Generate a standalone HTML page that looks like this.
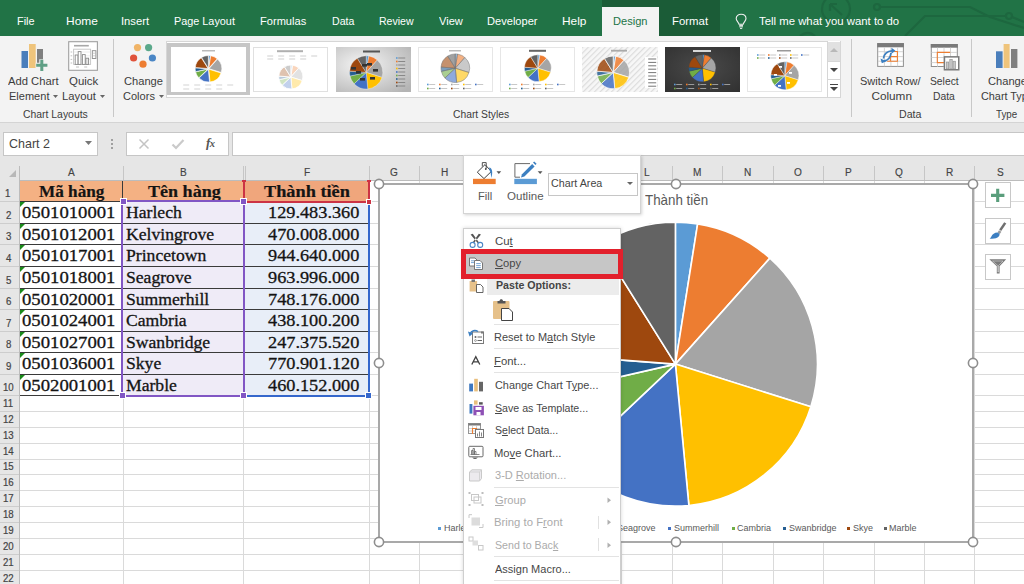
<!DOCTYPE html><html><head><meta charset="utf-8"><style>
*{margin:0;padding:0;box-sizing:border-box}
html,body{width:1024px;height:584px;overflow:hidden;background:#fff;font-family:'Liberation Sans',sans-serif}
.ab{position:absolute}
.t{position:absolute;white-space:nowrap;line-height:1}
u{text-decoration:underline;text-underline-offset:1px}
</style></head><body>
<div class="ab" style="left:0;top:0;width:1024px;height:36px;background:#217346"></div>
<div class="ab" style="left:602px;top:0;width:118px;height:36px;background:#1b5c37"></div>
<svg class="ab" style="left:780px;top:0" width="244" height="36" viewBox="0 0 244 36">
<g fill="none" stroke="#1d673f" stroke-width="2.2">
<circle cx="56" cy="9" r="14"/>
<path d="M62 15 L50 4 M50 4 L50 11 M50 4 L57 4"/>
<circle cx="97" cy="7" r="3"/>
<path d="M100 7 L190 7 L210 17 L244 28"/>
<path d="M125 36 L145 16 L225 16"/>
<circle cx="229" cy="16" r="3"/>
<path d="M232 17 L244 22"/>
<path d="M20 36 Q28 30 35 36"/>
</g></svg>
<div class="t" style="left:16.83px;top:15.03px;font-size:11.77px;font-family:'Liberation Sans',sans-serif;color:#fff;transform:scaleX(0.9266);transform-origin:0 0;">File</div>
<div class="t" style="left:65.64px;top:15.03px;font-size:11.77px;font-family:'Liberation Sans',sans-serif;color:#fff;transform:scaleX(1.0166);transform-origin:0 0;">Home</div>
<div class="t" style="left:120.99px;top:15.03px;font-size:11.77px;font-family:'Liberation Sans',sans-serif;color:#fff;transform:scaleX(0.9536);transform-origin:0 0;">Insert</div>
<div class="t" style="left:174.13px;top:15.03px;font-size:11.77px;font-family:'Liberation Sans',sans-serif;color:#fff;transform:scaleX(0.9216);transform-origin:0 0;">Page Layout</div>
<div class="t" style="left:260.11px;top:15.03px;font-size:11.77px;font-family:'Liberation Sans',sans-serif;color:#fff;transform:scaleX(0.9426);transform-origin:0 0;">Formulas</div>
<div class="t" style="left:331.65px;top:15.03px;font-size:11.77px;font-family:'Liberation Sans',sans-serif;color:#fff;transform:scaleX(0.8996);transform-origin:0 0;">Data</div>
<div class="t" style="left:379.16px;top:15.03px;font-size:11.77px;font-family:'Liberation Sans',sans-serif;color:#fff;transform:scaleX(0.8958);transform-origin:0 0;">Review</div>
<div class="t" style="left:438.94px;top:15.03px;font-size:11.77px;font-family:'Liberation Sans',sans-serif;color:#fff;transform:scaleX(0.9424);transform-origin:0 0;">View</div>
<div class="t" style="left:487.11px;top:15.03px;font-size:11.77px;font-family:'Liberation Sans',sans-serif;color:#fff;transform:scaleX(0.9427);transform-origin:0 0;">Developer</div>
<div class="t" style="left:562.05px;top:15.03px;font-size:11.77px;font-family:'Liberation Sans',sans-serif;color:#fff;transform:scaleX(1.0096);transform-origin:0 0;">Help</div>
<div class="t" style="left:671.79px;top:15.03px;font-size:11.77px;font-family:'Liberation Sans',sans-serif;color:#fff;transform:scaleX(0.9680);transform-origin:0 0;">Format</div>
<div class="t" style="left:759.17px;top:15.03px;font-size:11.77px;font-family:'Liberation Sans',sans-serif;color:#fff;transform:scaleX(0.9656);transform-origin:0 0;">Tell me what you want to do</div>
<div class="ab" style="left:602px;top:7px;width:57px;height:29px;background:#f3f3f3"></div>
<div class="t" style="left:612.86px;top:15.03px;font-size:11.77px;font-family:'Liberation Sans',sans-serif;color:#217346;transform:scaleX(0.9411);transform-origin:0 0;">Design</div>
<svg class="ab" style="left:730px;top:10px" width="22" height="22" viewBox="730 10 22 22">
<path d="M739 24.2 C738.8 22.3 736.2 21 736.2 18.6 C736.2 15.9 738.4 14.2 741.1 14.2 C743.8 14.2 746 15.9 746 18.6 C746 21 743.4 22.3 743.2 24.2 Z" fill="none" stroke="#f0f0f0" stroke-width="1.1"/>
<path d="M739.2 25.4 H743 M739.2 26.8 H743" stroke="#f0f0f0" stroke-width="1"/>
<path d="M740 28.4 H742.2" stroke="#f0f0f0" stroke-width="1"/>
</svg>
<div class="ab" style="left:0;top:36px;width:1024px;height:86px;background:#f3f3f3"></div>
<div class="ab" style="left:0;top:122px;width:1024px;height:1px;background:#d4d4d4"></div>
<svg class="ab" style="left:20px;top:42px" width="30" height="30" viewBox="0 0 30 30">
<rect x="1.5" y="9" width="6.5" height="17" fill="#4a7ebb"/>
<rect x="9" y="2" width="6.7" height="24" fill="#efc47b"/>
<rect x="17" y="7" width="6" height="14" fill="#7f7f7f"/>
<path d="M21.8 17.2 V29.4 M15.7 23.3 H27.9" stroke="#f3f3f3" stroke-width="5"/>
<path d="M21.8 17.7 V28.9 M16.2 23.3 H27.4" stroke="#5f9f85" stroke-width="3"/>
</svg>
<div class="t" style="left:7.50px;top:74.93px;font-size:11.77px;font-family:'Liberation Sans',sans-serif;color:#3c3c3c;transform:scaleX(0.9543);transform-origin:0 0;">Add Chart</div>
<div class="t" style="left:8.82px;top:90.13px;font-size:11.77px;font-family:'Liberation Sans',sans-serif;color:#3c3c3c;transform:scaleX(0.9372);transform-origin:0 0;">Element</div>
<svg class="ab" style="left:53px;top:95px" width="6" height="4"><path d="M0 0 L5 0 L2.5 3Z" fill="#666"/></svg>
<svg class="ab" style="left:66px;top:39px" width="34" height="34" viewBox="66 39 34 34">
<rect x="68.7" y="41.7" width="28.7" height="28.6" fill="#fff" stroke="#a0a0a0" stroke-width="1.1"/>
<rect x="74" y="44.9" width="14.8" height="1.6" fill="#a8a8a8"/>
<rect x="73.6" y="49.2" width="17" height="15.2" fill="none" stroke="#c4c4c4" stroke-width="0.9"/>
<path d="M74 52h16.5M74 55.8h16.5M74 59.5h16.5" stroke="#e0e0e0" stroke-width="0.6"/>
<rect x="75.2" y="55" width="2.8" height="9.4" fill="#fff" stroke="#8a8a8a" stroke-width="0.9"/>
<rect x="78.2" y="51.6" width="2.8" height="12.8" fill="#fff" stroke="#8a8a8a" stroke-width="0.9"/>
<rect x="82.4" y="54.6" width="2.8" height="9.8" fill="#fff" stroke="#8a8a8a" stroke-width="0.9"/>
<rect x="85.8" y="58.2" width="2.8" height="6.2" fill="#e8e8e8" stroke="#8a8a8a" stroke-width="0.9"/>
<rect x="92.3" y="50.7" width="3.6" height="7.8" fill="#fff" stroke="#8a8a8a" stroke-width="0.9"/>
<path d="M92.8 53.2h2.8M92.8 55.8h2.8" stroke="#b0b0b0" stroke-width="0.6"/>
<path d="M70.6 52h1.6M70.6 55.8h1.6M70.6 59.4h1.6M70.6 63h1.6" stroke="#b8b8b8" stroke-width="0.9"/>
<path d="M76 67h3M84.2 67h3" stroke="#c0c0c0" stroke-width="1"/>
</svg>
<div class="t" style="left:69.09px;top:74.93px;font-size:11.77px;font-family:'Liberation Sans',sans-serif;color:#3c3c3c;transform:scaleX(0.9712);transform-origin:0 0;">Quick</div>
<div class="t" style="left:62.30px;top:90.13px;font-size:11.77px;font-family:'Liberation Sans',sans-serif;color:#3c3c3c;transform:scaleX(0.9587);transform-origin:0 0;">Layout</div>
<svg class="ab" style="left:100px;top:95px" width="6" height="4"><path d="M0 0 L5 0 L2.5 3Z" fill="#666"/></svg>
<div class="t" style="left:22.58px;top:108.72px;font-size:10.61px;font-family:'Liberation Sans',sans-serif;color:#3c3c3c;transform:scaleX(0.9808);transform-origin:0 0;">Chart Layouts</div>
<div class="ab" style="left:113px;top:39px;width:1px;height:78px;background:#c8c8c8"></div>
<svg class="ab" style="left:128px;top:42px" width="30" height="28">
<circle cx="9.5" cy="5.6" r="3.6" fill="#f0b467"/>
<circle cx="20.6" cy="5.6" r="3.6" fill="#5ba98b"/>
<circle cx="5.6" cy="16" r="3.6" fill="#e0523a"/>
<circle cx="24.4" cy="16" r="3.6" fill="#4a86c5"/>
<circle cx="15" cy="22.2" r="3.6" fill="#ed7d31"/>
</svg>
<div class="t" style="left:124.04px;top:75.03px;font-size:11.77px;font-family:'Liberation Sans',sans-serif;color:#3c3c3c;transform:scaleX(0.9454);transform-origin:0 0;">Change</div>
<div class="t" style="left:123.25px;top:89.83px;font-size:11.77px;font-family:'Liberation Sans',sans-serif;color:#3c3c3c;transform:scaleX(0.9387);transform-origin:0 0;">Colors</div>
<svg class="ab" style="left:158.5px;top:95px" width="6" height="4"><path d="M0 0 L5 0 L2.5 3Z" fill="#666"/></svg>
<div class="ab" style="left:166px;top:41px;width:675px;height:57px;border:1px solid #d6d6d6;background:#fff"></div>
<div class="ab" style="left:167px;top:43px;width:83px;height:52px;background:#c6c6c6"></div>
<svg class="ab" style="left:171px;top:47px" width="75" height="45">
<rect width="75" height="45" fill="#fff"/>
<rect x="31" y="3.2" width="13" height="1.2" fill="#aaa"/>
<path d="M37.54 21.30 L37.54 8.50 A12.8 12.8 0 0 1 39.54 8.66 Z" fill="#5B9BD5" fill-opacity="1.0" stroke="#fff" stroke-width="0.6" stroke-linejoin="round"/><path d="M37.71 21.35 L39.72 8.71 A12.8 12.8 0 0 1 46.23 11.79 Z" fill="#ED7D31" fill-opacity="1.0" stroke="#fff" stroke-width="0.6" stroke-linejoin="round"/><path d="M37.98 21.67 L46.50 12.11 A12.8 12.8 0 0 1 50.19 25.51 Z" fill="#A5A5A5" fill-opacity="1.0" stroke="#fff" stroke-width="0.6" stroke-linejoin="round"/><path d="M37.81 22.19 L50.02 26.03 A12.8 12.8 0 0 1 39.03 34.93 Z" fill="#FFC000" fill-opacity="1.0" stroke="#fff" stroke-width="0.6" stroke-linejoin="round"/><path d="M37.32 22.27 L38.54 35.01 A12.8 12.8 0 0 1 28.02 31.06 Z" fill="#4472C4" fill-opacity="1.0" stroke="#fff" stroke-width="0.6" stroke-linejoin="round"/><path d="M37.06 22.04 L27.76 30.83 A12.8 12.8 0 0 1 24.58 24.89 Z" fill="#70AD47" fill-opacity="1.0" stroke="#fff" stroke-width="0.6" stroke-linejoin="round"/><path d="M37.00 21.84 L24.52 24.69 A12.8 12.8 0 0 1 24.24 20.87 Z" fill="#255E91" fill-opacity="1.0" stroke="#fff" stroke-width="0.6" stroke-linejoin="round"/><path d="M37.07 21.54 L24.31 20.58 A12.8 12.8 0 0 1 30.28 10.69 Z" fill="#9E480E" fill-opacity="1.0" stroke="#fff" stroke-width="0.6" stroke-linejoin="round"/><path d="M37.36 21.32 L30.57 10.47 A12.8 12.8 0 0 1 37.36 8.52 Z" fill="#636363" fill-opacity="1.0" stroke="#fff" stroke-width="0.6" stroke-linejoin="round"/>
<rect x="12.2" y="37.5" width="6" height="1" fill="#d4d4d4"/><rect x="23.2" y="37.5" width="6" height="1" fill="#d4d4d4"/><rect x="34.2" y="37.5" width="6" height="1" fill="#d4d4d4"/><rect x="45.2" y="37.5" width="6" height="1" fill="#d4d4d4"/><rect x="56.2" y="37.5" width="6" height="1" fill="#d4d4d4"/><rect x="12.2" y="41.5" width="6" height="1" fill="#d4d4d4"/><rect x="23.2" y="41.5" width="6" height="1" fill="#d4d4d4"/><rect x="34.2" y="41.5" width="6" height="1" fill="#d4d4d4"/><rect x="45.2" y="41.5" width="6" height="1" fill="#d4d4d4"/>
</svg>
<svg class="ab" style="left:253px;top:47px" width="75" height="45">
<defs><pattern id="hp2" width="2.6" height="2.6" patternUnits="userSpaceOnUse" patternTransform="rotate(45)"><rect width="2.6" height="2.6" fill="#fff"/><rect width="1.1" height="2.6" fill="#fff" fill-opacity="0.9"/></pattern></defs>
<rect x="0.5" y="0.5" width="74" height="44" fill="#fff" stroke="#e0e0e0"/>
<rect x="24" y="3.2" width="26" height="2" fill="#b0b0b0"/>
<rect x="14.2" y="8.5" width="6" height="1" fill="#d0d0d0"/><rect x="25.2" y="8.5" width="6" height="1" fill="#d0d0d0"/><rect x="36.2" y="8.5" width="6" height="1" fill="#d0d0d0"/><rect x="47.2" y="8.5" width="6" height="1" fill="#d0d0d0"/><rect x="58.2" y="8.5" width="6" height="1" fill="#d0d0d0"/><rect x="14.2" y="11.5" width="6" height="1" fill="#d0d0d0"/><rect x="25.2" y="11.5" width="6" height="1" fill="#d0d0d0"/><rect x="36.2" y="11.5" width="6" height="1" fill="#d0d0d0"/><rect x="47.2" y="11.5" width="6" height="1" fill="#d0d0d0"/>
<path d="M37.80 30.00 L37.80 18.00 A12 12 0 0 1 39.68 18.15 Z" fill="#5B9BD5" fill-opacity="0.5" stroke="#fff" stroke-width="0.8" stroke-linejoin="round"/><path d="M37.80 30.00 L39.68 18.15 A12 12 0 0 1 45.79 21.04 Z" fill="#ED7D31" fill-opacity="0.5" stroke="#fff" stroke-width="0.8" stroke-linejoin="round"/><path d="M37.80 30.00 L45.79 21.04 A12 12 0 0 1 49.25 33.60 Z" fill="#A5A5A5" fill-opacity="0.5" stroke="#fff" stroke-width="0.8" stroke-linejoin="round"/><path d="M37.80 30.00 L49.25 33.60 A12 12 0 0 1 38.94 41.95 Z" fill="#FFC000" fill-opacity="0.5" stroke="#fff" stroke-width="0.8" stroke-linejoin="round"/><path d="M37.80 30.00 L38.94 41.95 A12 12 0 0 1 29.08 38.24 Z" fill="#4472C4" fill-opacity="0.5" stroke="#fff" stroke-width="0.8" stroke-linejoin="round"/><path d="M37.80 30.00 L29.08 38.24 A12 12 0 0 1 26.10 32.68 Z" fill="#70AD47" fill-opacity="0.5" stroke="#fff" stroke-width="0.8" stroke-linejoin="round"/><path d="M37.80 30.00 L26.10 32.68 A12 12 0 0 1 25.83 29.09 Z" fill="#255E91" fill-opacity="0.5" stroke="#fff" stroke-width="0.8" stroke-linejoin="round"/><path d="M37.80 30.00 L25.83 29.09 A12 12 0 0 1 31.44 19.83 Z" fill="#9E480E" fill-opacity="0.5" stroke="#fff" stroke-width="0.8" stroke-linejoin="round"/><path d="M37.80 30.00 L31.44 19.83 A12 12 0 0 1 37.80 18.00 Z" fill="#636363" fill-opacity="0.5" stroke="#fff" stroke-width="0.8" stroke-linejoin="round"/>
<rect x="25" y="18" width="26" height="25" fill="url(#hp2)" opacity="0.35"/>
</svg>
<svg class="ab" style="left:336px;top:47px" width="75" height="45">
<defs><radialGradient id="g3" cx="35%" cy="40%" r="80%"><stop offset="0" stop-color="#f6f6f6"/><stop offset="1" stop-color="#b4b4b4"/></radialGradient></defs>
<rect width="75" height="45" fill="url(#g3)"/>
<rect x="27" y="3.5" width="17" height="2" fill="#555"/>
<path d="M30.20 25.40 L30.20 8.80 A16.6 16.6 0 0 1 32.80 9.00 Z" fill="#5B9BD5" fill-opacity="1.0" stroke="#fff" stroke-width="0.3" stroke-linejoin="round"/><path d="M30.20 25.40 L32.80 9.00 A16.6 16.6 0 0 1 41.25 13.01 Z" fill="#ED7D31" fill-opacity="1.0" stroke="#fff" stroke-width="0.3" stroke-linejoin="round"/><path d="M30.20 25.40 L41.25 13.01 A16.6 16.6 0 0 1 46.03 30.38 Z" fill="#A5A5A5" fill-opacity="1.0" stroke="#fff" stroke-width="0.3" stroke-linejoin="round"/><path d="M30.20 25.40 L46.03 30.38 A16.6 16.6 0 0 1 31.78 41.93 Z" fill="#FFC000" fill-opacity="1.0" stroke="#fff" stroke-width="0.3" stroke-linejoin="round"/><path d="M30.20 25.40 L31.78 41.93 A16.6 16.6 0 0 1 18.13 36.80 Z" fill="#4472C4" fill-opacity="1.0" stroke="#fff" stroke-width="0.3" stroke-linejoin="round"/><path d="M30.20 25.40 L18.13 36.80 A16.6 16.6 0 0 1 14.02 29.10 Z" fill="#70AD47" fill-opacity="1.0" stroke="#fff" stroke-width="0.3" stroke-linejoin="round"/><path d="M30.20 25.40 L14.02 29.10 A16.6 16.6 0 0 1 13.65 24.15 Z" fill="#255E91" fill-opacity="1.0" stroke="#fff" stroke-width="0.3" stroke-linejoin="round"/><path d="M30.20 25.40 L13.65 24.15 A16.6 16.6 0 0 1 21.40 11.33 Z" fill="#9E480E" fill-opacity="1.0" stroke="#fff" stroke-width="0.3" stroke-linejoin="round"/><path d="M30.20 25.40 L21.40 11.33 A16.6 16.6 0 0 1 30.20 8.80 Z" fill="#636363" fill-opacity="1.0" stroke="#fff" stroke-width="0.3" stroke-linejoin="round"/>
<rect x="26" y="17" width="5" height="2.6" fill="#333"/><rect x="31" y="16" width="5" height="2.6" fill="#333"/><rect x="37" y="22" width="5" height="2.6" fill="#333"/><rect x="34" y="30" width="5" height="2.6" fill="#333"/><rect x="24" y="31" width="5" height="2.6" fill="#333"/><rect x="20" y="24" width="5" height="2.6" fill="#333"/><rect x="15" y="20" width="5" height="2.6" fill="#333"/>
<rect x="60" y="10.2" width="1.6" height="1.6" fill="#5B9BD5"/><rect x="62.2" y="10.5" width="7" height="1" fill="#888"/><rect x="60" y="13.7" width="1.6" height="1.6" fill="#ED7D31"/><rect x="62.2" y="14.0" width="7" height="1" fill="#888"/><rect x="60" y="17.2" width="1.6" height="1.6" fill="#A5A5A5"/><rect x="62.2" y="17.5" width="7" height="1" fill="#888"/><rect x="60" y="20.7" width="1.6" height="1.6" fill="#FFC000"/><rect x="62.2" y="21.0" width="7" height="1" fill="#888"/><rect x="60" y="24.2" width="1.6" height="1.6" fill="#4472C4"/><rect x="62.2" y="24.5" width="7" height="1" fill="#888"/><rect x="60" y="27.7" width="1.6" height="1.6" fill="#70AD47"/><rect x="62.2" y="28.0" width="7" height="1" fill="#888"/><rect x="60" y="31.2" width="1.6" height="1.6" fill="#255E91"/><rect x="62.2" y="31.5" width="7" height="1" fill="#888"/><rect x="60" y="34.7" width="1.6" height="1.6" fill="#9E480E"/><rect x="62.2" y="35.0" width="7" height="1" fill="#888"/><rect x="60" y="38.2" width="1.6" height="1.6" fill="#636363"/><rect x="62.2" y="38.5" width="7" height="1" fill="#888"/>
</svg>
<svg class="ab" style="left:418px;top:47px" width="75" height="45">
<rect x="0.5" y="0.5" width="74" height="44" fill="#fff" stroke="#e6e6e6"/>
<rect x="31" y="3.2" width="12" height="1.2" fill="#aaa"/>
<path d="M37.30 21.20 L37.30 6.90 A14.3 14.3 0 0 1 39.54 7.08 Z" fill="#5B9BD5" fill-opacity="0.6" stroke="#777" stroke-width="0.5" stroke-linejoin="round"/><path d="M37.30 21.20 L39.54 7.08 A14.3 14.3 0 0 1 46.82 10.53 Z" fill="#ED7D31" fill-opacity="0.6" stroke="#777" stroke-width="0.5" stroke-linejoin="round"/><path d="M37.30 21.20 L46.82 10.53 A14.3 14.3 0 0 1 50.94 25.49 Z" fill="#A5A5A5" fill-opacity="0.6" stroke="#777" stroke-width="0.5" stroke-linejoin="round"/><path d="M37.30 21.20 L50.94 25.49 A14.3 14.3 0 0 1 38.66 35.44 Z" fill="#FFC000" fill-opacity="0.6" stroke="#777" stroke-width="0.5" stroke-linejoin="round"/><path d="M37.30 21.20 L38.66 35.44 A14.3 14.3 0 0 1 26.91 31.02 Z" fill="#4472C4" fill-opacity="0.6" stroke="#777" stroke-width="0.5" stroke-linejoin="round"/><path d="M37.30 21.20 L26.91 31.02 A14.3 14.3 0 0 1 23.36 24.39 Z" fill="#70AD47" fill-opacity="0.6" stroke="#777" stroke-width="0.5" stroke-linejoin="round"/><path d="M37.30 21.20 L23.36 24.39 A14.3 14.3 0 0 1 23.04 20.12 Z" fill="#255E91" fill-opacity="0.6" stroke="#777" stroke-width="0.5" stroke-linejoin="round"/><path d="M37.30 21.20 L23.04 20.12 A14.3 14.3 0 0 1 29.72 9.08 Z" fill="#9E480E" fill-opacity="0.6" stroke="#777" stroke-width="0.5" stroke-linejoin="round"/><path d="M37.30 21.20 L29.72 9.08 A14.3 14.3 0 0 1 37.30 6.90 Z" fill="#636363" fill-opacity="0.6" stroke="#777" stroke-width="0.5" stroke-linejoin="round"/>
<rect x="9" y="36.7" width="1.6" height="1.6" fill="#5B9BD5"/><rect x="11.2" y="37.0" width="6" height="1" fill="#c8c8c8"/><rect x="21" y="36.7" width="1.6" height="1.6" fill="#ED7D31"/><rect x="23.2" y="37.0" width="6" height="1" fill="#c8c8c8"/><rect x="33" y="36.7" width="1.6" height="1.6" fill="#A5A5A5"/><rect x="35.2" y="37.0" width="6" height="1" fill="#c8c8c8"/><rect x="45" y="36.7" width="1.6" height="1.6" fill="#FFC000"/><rect x="47.2" y="37.0" width="6" height="1" fill="#c8c8c8"/><rect x="57" y="36.7" width="1.6" height="1.6" fill="#4472C4"/><rect x="59.2" y="37.0" width="6" height="1" fill="#c8c8c8"/><rect x="9" y="40.7" width="1.6" height="1.6" fill="#70AD47"/><rect x="11.2" y="41.0" width="6" height="1" fill="#c8c8c8"/><rect x="21" y="40.7" width="1.6" height="1.6" fill="#255E91"/><rect x="23.2" y="41.0" width="6" height="1" fill="#c8c8c8"/><rect x="33" y="40.7" width="1.6" height="1.6" fill="#9E480E"/><rect x="35.2" y="41.0" width="6" height="1" fill="#c8c8c8"/><rect x="45" y="40.7" width="1.6" height="1.6" fill="#636363"/><rect x="47.2" y="41.0" width="6" height="1" fill="#c8c8c8"/>
</svg>
<svg class="ab" style="left:500px;top:47px" width="75" height="45">
<rect x="0.5" y="0.5" width="74" height="44" fill="#fff" stroke="#e6e6e6"/>
<rect x="29" y="2.8" width="17" height="2" fill="#666"/>
<path d="M37.80 21.20 L37.80 7.80 A13.4 13.4 0 0 1 39.90 7.97 Z" fill="#5B9BD5" fill-opacity="1.0" stroke="#fff" stroke-width="0.4" stroke-linejoin="round"/><path d="M37.80 21.20 L39.90 7.97 A13.4 13.4 0 0 1 46.72 11.20 Z" fill="#ED7D31" fill-opacity="1.0" stroke="#fff" stroke-width="0.4" stroke-linejoin="round"/><path d="M37.80 21.20 L46.72 11.20 A13.4 13.4 0 0 1 50.58 25.22 Z" fill="#A5A5A5" fill-opacity="1.0" stroke="#fff" stroke-width="0.4" stroke-linejoin="round"/><path d="M37.80 21.20 L50.58 25.22 A13.4 13.4 0 0 1 39.07 34.54 Z" fill="#FFC000" fill-opacity="1.0" stroke="#fff" stroke-width="0.4" stroke-linejoin="round"/><path d="M37.80 21.20 L39.07 34.54 A13.4 13.4 0 0 1 28.06 30.40 Z" fill="#4472C4" fill-opacity="1.0" stroke="#fff" stroke-width="0.4" stroke-linejoin="round"/><path d="M37.80 21.20 L28.06 30.40 A13.4 13.4 0 0 1 24.74 24.19 Z" fill="#70AD47" fill-opacity="1.0" stroke="#fff" stroke-width="0.4" stroke-linejoin="round"/><path d="M37.80 21.20 L24.74 24.19 A13.4 13.4 0 0 1 24.44 20.19 Z" fill="#255E91" fill-opacity="1.0" stroke="#fff" stroke-width="0.4" stroke-linejoin="round"/><path d="M37.80 21.20 L24.44 20.19 A13.4 13.4 0 0 1 30.69 9.84 Z" fill="#9E480E" fill-opacity="1.0" stroke="#fff" stroke-width="0.4" stroke-linejoin="round"/><path d="M37.80 21.20 L30.69 9.84 A13.4 13.4 0 0 1 37.80 7.80 Z" fill="#636363" fill-opacity="1.0" stroke="#fff" stroke-width="0.4" stroke-linejoin="round"/>
<rect x="9" y="36.7" width="1.6" height="1.6" fill="#5B9BD5"/><rect x="11.2" y="37.0" width="6" height="1" fill="#c8c8c8"/><rect x="21" y="36.7" width="1.6" height="1.6" fill="#ED7D31"/><rect x="23.2" y="37.0" width="6" height="1" fill="#c8c8c8"/><rect x="33" y="36.7" width="1.6" height="1.6" fill="#A5A5A5"/><rect x="35.2" y="37.0" width="6" height="1" fill="#c8c8c8"/><rect x="45" y="36.7" width="1.6" height="1.6" fill="#FFC000"/><rect x="47.2" y="37.0" width="6" height="1" fill="#c8c8c8"/><rect x="57" y="36.7" width="1.6" height="1.6" fill="#4472C4"/><rect x="59.2" y="37.0" width="6" height="1" fill="#c8c8c8"/><rect x="9" y="40.7" width="1.6" height="1.6" fill="#70AD47"/><rect x="11.2" y="41.0" width="6" height="1" fill="#c8c8c8"/><rect x="21" y="40.7" width="1.6" height="1.6" fill="#255E91"/><rect x="23.2" y="41.0" width="6" height="1" fill="#c8c8c8"/><rect x="33" y="40.7" width="1.6" height="1.6" fill="#9E480E"/><rect x="35.2" y="41.0" width="6" height="1" fill="#c8c8c8"/><rect x="45" y="40.7" width="1.6" height="1.6" fill="#636363"/><rect x="47.2" y="41.0" width="6" height="1" fill="#c8c8c8"/>
</svg>
<svg class="ab" style="left:582px;top:47px" width="76" height="45">
<defs><pattern id="st" width="4" height="4" patternUnits="userSpaceOnUse" patternTransform="rotate(45)"><rect width="4" height="4" fill="#f7f7f7"/><rect width="1.2" height="4" fill="#dcdcdc"/></pattern></defs>
<rect width="76" height="45" fill="url(#st)"/>
<rect x="29" y="2.8" width="16" height="1.8" fill="#aaa"/>
<path d="M31.20 25.40 L31.20 9.00 A16.4 16.4 0 0 1 33.77 9.20 Z" fill="#5B9BD5" fill-opacity="0.85" stroke="#fff" stroke-width="0.7" stroke-linejoin="round"/><path d="M31.20 25.40 L33.77 9.20 A16.4 16.4 0 0 1 42.11 13.16 Z" fill="#ED7D31" fill-opacity="0.85" stroke="#fff" stroke-width="0.7" stroke-linejoin="round"/><path d="M31.20 25.40 L42.11 13.16 A16.4 16.4 0 0 1 46.84 30.32 Z" fill="#A5A5A5" fill-opacity="0.85" stroke="#fff" stroke-width="0.7" stroke-linejoin="round"/><path d="M31.20 25.40 L46.84 30.32 A16.4 16.4 0 0 1 32.76 41.73 Z" fill="#FFC000" fill-opacity="0.85" stroke="#fff" stroke-width="0.7" stroke-linejoin="round"/><path d="M31.20 25.40 L32.76 41.73 A16.4 16.4 0 0 1 19.28 36.66 Z" fill="#4472C4" fill-opacity="0.85" stroke="#fff" stroke-width="0.7" stroke-linejoin="round"/><path d="M31.20 25.40 L19.28 36.66 A16.4 16.4 0 0 1 15.21 29.06 Z" fill="#70AD47" fill-opacity="0.85" stroke="#fff" stroke-width="0.7" stroke-linejoin="round"/><path d="M31.20 25.40 L15.21 29.06 A16.4 16.4 0 0 1 14.85 24.16 Z" fill="#255E91" fill-opacity="0.85" stroke="#fff" stroke-width="0.7" stroke-linejoin="round"/><path d="M31.20 25.40 L14.85 24.16 A16.4 16.4 0 0 1 22.50 11.50 Z" fill="#9E480E" fill-opacity="0.85" stroke="#fff" stroke-width="0.7" stroke-linejoin="round"/><path d="M31.20 25.40 L22.50 11.50 A16.4 16.4 0 0 1 31.20 9.00 Z" fill="#636363" fill-opacity="0.85" stroke="#fff" stroke-width="0.7" stroke-linejoin="round"/>
<rect x="63" y="10" width="12" height="31" fill="#fff"/>
<rect x="66.2" y="11.5" width="8" height="1" fill="#777"/><rect x="66.2" y="14.9" width="8" height="1" fill="#777"/><rect x="66.2" y="18.3" width="8" height="1" fill="#777"/><rect x="66.2" y="21.7" width="8" height="1" fill="#777"/><rect x="66.2" y="25.1" width="8" height="1" fill="#777"/><rect x="66.2" y="28.5" width="8" height="1" fill="#777"/><rect x="66.2" y="31.9" width="8" height="1" fill="#777"/><rect x="66.2" y="35.3" width="8" height="1" fill="#777"/><rect x="66.2" y="38.7" width="8" height="1" fill="#777"/>
</svg>
<svg class="ab" style="left:665px;top:47px" width="75" height="45">
<defs><radialGradient id="g7" cx="50%" cy="45%" r="75%"><stop offset="0" stop-color="#4a4a4a"/><stop offset="1" stop-color="#303030"/></radialGradient></defs>
<rect width="75" height="45" fill="url(#g7)"/>
<rect x="28" y="3" width="18" height="2" fill="#d8d8d8"/>
<path d="M37.30 21.20 L37.30 7.70 A13.5 13.5 0 0 1 39.41 7.87 Z" fill="#5B9BD5" fill-opacity="1.0" stroke="#444" stroke-width="0.3" stroke-linejoin="round"/><path d="M37.30 21.20 L39.41 7.87 A13.5 13.5 0 0 1 46.28 11.12 Z" fill="#ED7D31" fill-opacity="1.0" stroke="#444" stroke-width="0.3" stroke-linejoin="round"/><path d="M37.30 21.20 L46.28 11.12 A13.5 13.5 0 0 1 50.18 25.25 Z" fill="#A5A5A5" fill-opacity="1.0" stroke="#444" stroke-width="0.3" stroke-linejoin="round"/><path d="M37.30 21.20 L50.18 25.25 A13.5 13.5 0 0 1 38.58 34.64 Z" fill="#FFC000" fill-opacity="1.0" stroke="#444" stroke-width="0.3" stroke-linejoin="round"/><path d="M37.30 21.20 L38.58 34.64 A13.5 13.5 0 0 1 27.49 30.47 Z" fill="#4472C4" fill-opacity="1.0" stroke="#444" stroke-width="0.3" stroke-linejoin="round"/><path d="M37.30 21.20 L27.49 30.47 A13.5 13.5 0 0 1 24.14 24.21 Z" fill="#70AD47" fill-opacity="1.0" stroke="#444" stroke-width="0.3" stroke-linejoin="round"/><path d="M37.30 21.20 L24.14 24.21 A13.5 13.5 0 0 1 23.84 20.18 Z" fill="#255E91" fill-opacity="1.0" stroke="#444" stroke-width="0.3" stroke-linejoin="round"/><path d="M37.30 21.20 L23.84 20.18 A13.5 13.5 0 0 1 30.14 9.75 Z" fill="#9E480E" fill-opacity="1.0" stroke="#444" stroke-width="0.3" stroke-linejoin="round"/><path d="M37.30 21.20 L30.14 9.75 A13.5 13.5 0 0 1 37.30 7.70 Z" fill="#636363" fill-opacity="1.0" stroke="#444" stroke-width="0.3" stroke-linejoin="round"/>
<rect x="9" y="36.7" width="1.6" height="1.6" fill="#5B9BD5"/><rect x="11.2" y="37.0" width="6" height="1" fill="#9a9a9a"/><rect x="21" y="36.7" width="1.6" height="1.6" fill="#ED7D31"/><rect x="23.2" y="37.0" width="6" height="1" fill="#9a9a9a"/><rect x="33" y="36.7" width="1.6" height="1.6" fill="#A5A5A5"/><rect x="35.2" y="37.0" width="6" height="1" fill="#9a9a9a"/><rect x="45" y="36.7" width="1.6" height="1.6" fill="#FFC000"/><rect x="47.2" y="37.0" width="6" height="1" fill="#9a9a9a"/><rect x="57" y="36.7" width="1.6" height="1.6" fill="#4472C4"/><rect x="59.2" y="37.0" width="6" height="1" fill="#9a9a9a"/><rect x="9" y="40.7" width="1.6" height="1.6" fill="#70AD47"/><rect x="11.2" y="41.0" width="6" height="1" fill="#9a9a9a"/><rect x="21" y="40.7" width="1.6" height="1.6" fill="#255E91"/><rect x="23.2" y="41.0" width="6" height="1" fill="#9a9a9a"/><rect x="33" y="40.7" width="1.6" height="1.6" fill="#9E480E"/><rect x="35.2" y="41.0" width="6" height="1" fill="#9a9a9a"/><rect x="45" y="40.7" width="1.6" height="1.6" fill="#636363"/><rect x="47.2" y="41.0" width="6" height="1" fill="#9a9a9a"/>
</svg>
<svg class="ab" style="left:747px;top:47px" width="75" height="45">
<rect x="0.5" y="0.5" width="74" height="44" fill="#fff" stroke="#e6e6e6"/>
<rect x="30" y="3" width="14" height="1.5" fill="#999"/>
<rect x="10" y="7.2" width="1.6" height="1.6" fill="#5B9BD5"/><rect x="12.2" y="7.5" width="6" height="1" fill="#c8c8c8"/><rect x="21" y="7.2" width="1.6" height="1.6" fill="#ED7D31"/><rect x="23.2" y="7.5" width="6" height="1" fill="#c8c8c8"/><rect x="32" y="7.2" width="1.6" height="1.6" fill="#A5A5A5"/><rect x="34.2" y="7.5" width="6" height="1" fill="#c8c8c8"/><rect x="43" y="7.2" width="1.6" height="1.6" fill="#FFC000"/><rect x="45.2" y="7.5" width="6" height="1" fill="#c8c8c8"/><rect x="54" y="7.2" width="1.6" height="1.6" fill="#4472C4"/><rect x="56.2" y="7.5" width="6" height="1" fill="#c8c8c8"/><rect x="10" y="10.2" width="1.6" height="1.6" fill="#70AD47"/><rect x="12.2" y="10.5" width="6" height="1" fill="#c8c8c8"/><rect x="21" y="10.2" width="1.6" height="1.6" fill="#255E91"/><rect x="23.2" y="10.5" width="6" height="1" fill="#c8c8c8"/><rect x="32" y="10.2" width="1.6" height="1.6" fill="#9E480E"/><rect x="34.2" y="10.5" width="6" height="1" fill="#c8c8c8"/><rect x="43" y="10.2" width="1.6" height="1.6" fill="#636363"/><rect x="45.2" y="10.5" width="6" height="1" fill="#c8c8c8"/>
<path d="M37.80 28.70 L37.80 14.70 A14 14 0 0 1 39.99 14.87 Z" fill="#5B9BD5" fill-opacity="1.0" stroke="#fff" stroke-width="0.4" stroke-linejoin="round"/><path d="M37.80 28.70 L39.99 14.87 A14 14 0 0 1 47.12 18.25 Z" fill="#ED7D31" fill-opacity="1.0" stroke="#fff" stroke-width="0.4" stroke-linejoin="round"/><path d="M37.80 28.70 L47.12 18.25 A14 14 0 0 1 51.15 32.90 Z" fill="#A5A5A5" fill-opacity="1.0" stroke="#fff" stroke-width="0.4" stroke-linejoin="round"/><path d="M37.80 28.70 L51.15 32.90 A14 14 0 0 1 39.13 42.64 Z" fill="#FFC000" fill-opacity="1.0" stroke="#fff" stroke-width="0.4" stroke-linejoin="round"/><path d="M37.80 28.70 L39.13 42.64 A14 14 0 0 1 27.62 38.32 Z" fill="#4472C4" fill-opacity="1.0" stroke="#fff" stroke-width="0.4" stroke-linejoin="round"/><path d="M37.80 28.70 L27.62 38.32 A14 14 0 0 1 24.15 31.82 Z" fill="#70AD47" fill-opacity="1.0" stroke="#fff" stroke-width="0.4" stroke-linejoin="round"/><path d="M37.80 28.70 L24.15 31.82 A14 14 0 0 1 23.84 27.64 Z" fill="#255E91" fill-opacity="1.0" stroke="#fff" stroke-width="0.4" stroke-linejoin="round"/><path d="M37.80 28.70 L23.84 27.64 A14 14 0 0 1 30.38 16.83 Z" fill="#9E480E" fill-opacity="1.0" stroke="#fff" stroke-width="0.4" stroke-linejoin="round"/><path d="M37.80 28.70 L30.38 16.83 A14 14 0 0 1 37.80 14.70 Z" fill="#636363" fill-opacity="1.0" stroke="#fff" stroke-width="0.4" stroke-linejoin="round"/>
<rect x="32" y="19" width="3" height="1.8" fill="#fff"/><rect x="42" y="25" width="3" height="1.8" fill="#fff"/><rect x="40" y="35" width="3" height="1.8" fill="#fff"/><rect x="31" y="38" width="3" height="1.8" fill="#fff"/><rect x="27" y="27" width="3" height="1.8" fill="#fff"/>
</svg>
<div class="ab" style="left:827px;top:41px;width:14px;height:57px;border-left:1px solid #d6d6d6;border-right:1px solid #d6d6d6;border-bottom:1px solid #d6d6d6;background:#fff"></div>
<div class="ab" style="left:828px;top:42px;width:12px;height:19px;background:#e1e1e1"></div>
<svg class="ab" style="left:830px;top:48px" width="8" height="5"><path d="M0 4 L8 4 L4 0Z" fill="#b9b9b9"/></svg>
<div class="ab" style="left:828px;top:61px;width:12px;height:1px;background:#d6d6d6"></div>
<svg class="ab" style="left:830px;top:68px" width="8" height="5"><path d="M0 0 L8 0 L4 4Z" fill="#444"/></svg>
<div class="ab" style="left:828px;top:79px;width:12px;height:1px;background:#d6d6d6"></div>
<div class="ab" style="left:830px;top:84px;width:8px;height:1px;background:#444"></div>
<svg class="ab" style="left:830px;top:87px" width="8" height="5"><path d="M0 0 L8 0 L4 4Z" fill="#444"/></svg>
<div class="t" style="left:453.48px;top:108.72px;font-size:10.61px;font-family:'Liberation Sans',sans-serif;color:#3c3c3c;transform:scaleX(0.9724);transform-origin:0 0;">Chart Styles</div>
<div class="ab" style="left:851px;top:39px;width:1px;height:78px;background:#c8c8c8"></div>
<svg class="ab" style="left:870px;top:38px" width="95" height="37" viewBox="870 38 95 37">
<rect x="877.7" y="43.6" width="25.7" height="22.8" fill="#fff" stroke="#8f8f8f" stroke-width="1"/>
<rect x="877.2" y="43.1" width="26.7" height="4.2" fill="#7a7a7a"/>
<path d="M878 51.7h25M878 56.6h25M878 61.2h25M884.4 47.3v19M890.9 47.3v19M897.6 47.3v19" stroke="#cfcfcf" stroke-width="0.9"/>
<path d="M894.1 51.5 H897.4 V61.2 H887.2 M890.4 61.2 V56.6 H897.4" fill="none" stroke="#ed7d31" stroke-width="1.1"/>
<path d="M883.5 58.5 C884 54 887.5 51 892 50.8" fill="none" stroke="#3c7fc1" stroke-width="1.8"/>
<path d="M891.5 47.8 L895.5 50.8 L891.5 53.8 Z" fill="#3c7fc1"/>
<path d="M891 53 C890.5 57.5 887.5 60.5 884 61" fill="none" stroke="#3c7fc1" stroke-width="1.8"/>
<path d="M880.5 58.5 L881.8 63.2 L886.2 61.3 Z" fill="#3c7fc1"/>
<rect x="931.3" y="44.5" width="26" height="22" fill="#fff" stroke="#8f8f8f" stroke-width="1"/>
<rect x="930.8" y="44" width="27" height="3.7" fill="#7a7a7a"/>
<path d="M931.5 52.4h25.5M931.5 57.5h25.5M931.5 62.6h25.5M937.5 47.7v19M944 47.7v19M950.5 47.7v19" stroke="#cfcfcf" stroke-width="0.9"/>
<path d="M950.2 52.4 H937.3 V62.6 H944" fill="none" stroke="#ed7d31" stroke-width="1.1"/>
<rect x="943.7" y="56.1" width="15.8" height="14.4" fill="#7a7a7a"/>
<rect x="945.2" y="57.6" width="12.8" height="11.4" fill="#fff"/>
<rect x="946.5" y="62" width="2.2" height="7" fill="#c8c8c8" stroke="#8a8a8a" stroke-width="0.6"/>
<rect x="949.8" y="59.5" width="2.4" height="9.5" fill="#c8c8c8" stroke="#8a8a8a" stroke-width="0.6"/>
<rect x="953" y="61.2" width="2.4" height="7.8" fill="#c8c8c8" stroke="#8a8a8a" stroke-width="0.6"/>
</svg>
<div class="t" style="left:860.30px;top:75.23px;font-size:11.77px;font-family:'Liberation Sans',sans-serif;color:#3c3c3c;transform:scaleX(0.9365);transform-origin:0 0;">Switch Row/</div>
<div class="t" style="left:871.41px;top:90.13px;font-size:11.77px;font-family:'Liberation Sans',sans-serif;color:#3c3c3c;">Column</div>
<div class="t" style="left:929.64px;top:75.23px;font-size:11.77px;font-family:'Liberation Sans',sans-serif;color:#3c3c3c;transform:scaleX(0.8759);transform-origin:0 0;">Select</div>
<div class="t" style="left:933.07px;top:90.13px;font-size:11.77px;font-family:'Liberation Sans',sans-serif;color:#3c3c3c;transform:scaleX(0.8787);transform-origin:0 0;">Data</div>
<div class="t" style="left:899.05px;top:108.72px;font-size:10.61px;font-family:'Liberation Sans',sans-serif;color:#3c3c3c;">Data</div>
<div class="ab" style="left:971px;top:39px;width:1px;height:78px;background:#c8c8c8"></div>
<svg class="ab" style="left:995px;top:43px" width="25" height="26">
<rect x="1" y="8.3" width="6.6" height="16.7" fill="#4a7ebb"/>
<rect x="8.6" y="1" width="6" height="24" fill="#efc47b"/>
<rect x="16" y="6" width="6.4" height="19" fill="#7f7f7f"/>
</svg>
<div class="t" style="left:988.44px;top:75.23px;font-size:11.77px;font-family:'Liberation Sans',sans-serif;color:#3c3c3c;transform:scaleX(0.9454);transform-origin:0 0;">Change</div>
<div class="t" style="left:981.21px;top:90.13px;font-size:11.77px;font-family:'Liberation Sans',sans-serif;color:#3c3c3c;transform:scaleX(0.9220);transform-origin:0 0;">Chart Type</div>
<div class="t" style="left:996.40px;top:108.72px;font-size:10.61px;font-family:'Liberation Sans',sans-serif;color:#3c3c3c;transform:scaleX(0.9200);transform-origin:0 0;">Type</div>
<div class="ab" style="left:0;top:123px;width:1024px;height:43px;background:#e6e6e6"></div>
<div class="ab" style="left:3px;top:132px;width:95px;height:24px;background:#fff;border:1px solid #c6c6c6"></div>
<div class="t" style="left:8.98px;top:137.77px;font-size:12.79px;font-family:'Liberation Sans',sans-serif;color:#444;transform:scaleX(0.9760);transform-origin:0 0;">Chart 2</div>
<svg class="ab" style="left:85px;top:141px" width="8" height="5"><path d="M0 0 L7 0 L3.5 4Z" fill="#777"/></svg>
<div class="ab" style="left:111px;top:139px;width:2px;height:2px;background:#a0a0a0"></div>
<div class="ab" style="left:111px;top:143px;width:2px;height:2px;background:#a0a0a0"></div>
<div class="ab" style="left:111px;top:147px;width:2px;height:2px;background:#a0a0a0"></div>
<div class="ab" style="left:126px;top:132px;width:103px;height:24px;background:#fff;border:1px solid #c6c6c6"></div>
<svg class="ab" style="left:138px;top:138px" width="12" height="12"><path d="M1.5 1.5 L10.5 10.5 M10.5 1.5 L1.5 10.5" stroke="#c4c4c4" stroke-width="1.5"/></svg>
<svg class="ab" style="left:171px;top:138px" width="14" height="12"><path d="M1.5 6.5 L5 10 L12.5 2" fill="none" stroke="#cacaca" stroke-width="2.2"/></svg>
<div class="t" style="left:206px;top:136px;font-size:13px;font-family:'Liberation Serif', serif;font-style:italic;font-weight:bold;color:#555">f<span style="font-size:10.5px;letter-spacing:-0.5px;margin-left:-0.5px">x</span></div>
<div class="ab" style="left:232px;top:132px;width:800px;height:24px;background:#fff;border:1px solid #c6c6c6"></div>
<div class="ab" style="left:0;top:166px;width:1024px;height:418px;background:#fff"></div>
<div class="ab" style="left:0;top:166px;width:1024px;height:15px;background:#e6e6e6;border-bottom:1px solid #bcbcbc"></div>
<div class="ab" style="left:0;top:166px;width:20px;height:418px;background:#e6e6e6;border-right:1px solid #bcbcbc"></div>
<svg class="ab" style="left:8px;top:169px" width="9" height="9"><path d="M8 1 L8 8 L1 8Z" fill="#b8b8b8"/></svg>
<div class="ab" style="left:123px;top:181px;width:1px;height:403px;background:#dadada"></div>
<div class="ab" style="left:123px;top:166px;width:1px;height:14px;background:#c6c6c6"></div>
<div class="ab" style="left:243px;top:181px;width:1px;height:403px;background:#dadada"></div>
<div class="ab" style="left:243px;top:166px;width:1px;height:14px;background:#c6c6c6"></div>
<div class="ab" style="left:369px;top:181px;width:1px;height:403px;background:#dadada"></div>
<div class="ab" style="left:369px;top:166px;width:1px;height:14px;background:#c6c6c6"></div>
<div class="ab" style="left:419px;top:181px;width:1px;height:403px;background:#dadada"></div>
<div class="ab" style="left:419px;top:166px;width:1px;height:14px;background:#c6c6c6"></div>
<div class="ab" style="left:470px;top:181px;width:1px;height:403px;background:#dadada"></div>
<div class="ab" style="left:470px;top:166px;width:1px;height:14px;background:#c6c6c6"></div>
<div class="ab" style="left:520px;top:181px;width:1px;height:403px;background:#dadada"></div>
<div class="ab" style="left:520px;top:166px;width:1px;height:14px;background:#c6c6c6"></div>
<div class="ab" style="left:571px;top:181px;width:1px;height:403px;background:#dadada"></div>
<div class="ab" style="left:571px;top:166px;width:1px;height:14px;background:#c6c6c6"></div>
<div class="ab" style="left:621px;top:181px;width:1px;height:403px;background:#dadada"></div>
<div class="ab" style="left:621px;top:166px;width:1px;height:14px;background:#c6c6c6"></div>
<div class="ab" style="left:672px;top:181px;width:1px;height:403px;background:#dadada"></div>
<div class="ab" style="left:672px;top:166px;width:1px;height:14px;background:#c6c6c6"></div>
<div class="ab" style="left:722px;top:181px;width:1px;height:403px;background:#dadada"></div>
<div class="ab" style="left:722px;top:166px;width:1px;height:14px;background:#c6c6c6"></div>
<div class="ab" style="left:773px;top:181px;width:1px;height:403px;background:#dadada"></div>
<div class="ab" style="left:773px;top:166px;width:1px;height:14px;background:#c6c6c6"></div>
<div class="ab" style="left:823px;top:181px;width:1px;height:403px;background:#dadada"></div>
<div class="ab" style="left:823px;top:166px;width:1px;height:14px;background:#c6c6c6"></div>
<div class="ab" style="left:874px;top:181px;width:1px;height:403px;background:#dadada"></div>
<div class="ab" style="left:874px;top:166px;width:1px;height:14px;background:#c6c6c6"></div>
<div class="ab" style="left:924px;top:181px;width:1px;height:403px;background:#dadada"></div>
<div class="ab" style="left:924px;top:166px;width:1px;height:14px;background:#c6c6c6"></div>
<div class="ab" style="left:974px;top:181px;width:1px;height:403px;background:#dadada"></div>
<div class="ab" style="left:974px;top:166px;width:1px;height:14px;background:#c6c6c6"></div>
<div class="ab" style="left:245px;top:166px;width:1px;height:14px;background:#c6c6c6"></div>
<div class="ab" style="left:20px;top:201px;width:1004px;height:1px;background:#dadada"></div>
<div class="ab" style="left:0;top:201px;width:19px;height:1px;background:#cdcdcd"></div>
<div class="ab" style="left:20px;top:223px;width:1004px;height:1px;background:#dadada"></div>
<div class="ab" style="left:0;top:223px;width:19px;height:1px;background:#cdcdcd"></div>
<div class="ab" style="left:20px;top:244px;width:1004px;height:1px;background:#dadada"></div>
<div class="ab" style="left:0;top:244px;width:19px;height:1px;background:#cdcdcd"></div>
<div class="ab" style="left:20px;top:266px;width:1004px;height:1px;background:#dadada"></div>
<div class="ab" style="left:0;top:266px;width:19px;height:1px;background:#cdcdcd"></div>
<div class="ab" style="left:20px;top:288px;width:1004px;height:1px;background:#dadada"></div>
<div class="ab" style="left:0;top:288px;width:19px;height:1px;background:#cdcdcd"></div>
<div class="ab" style="left:20px;top:309px;width:1004px;height:1px;background:#dadada"></div>
<div class="ab" style="left:0;top:309px;width:19px;height:1px;background:#cdcdcd"></div>
<div class="ab" style="left:20px;top:331px;width:1004px;height:1px;background:#dadada"></div>
<div class="ab" style="left:0;top:331px;width:19px;height:1px;background:#cdcdcd"></div>
<div class="ab" style="left:20px;top:352px;width:1004px;height:1px;background:#dadada"></div>
<div class="ab" style="left:0;top:352px;width:19px;height:1px;background:#cdcdcd"></div>
<div class="ab" style="left:20px;top:374px;width:1004px;height:1px;background:#dadada"></div>
<div class="ab" style="left:0;top:374px;width:19px;height:1px;background:#cdcdcd"></div>
<div class="ab" style="left:20px;top:395px;width:1004px;height:1px;background:#dadada"></div>
<div class="ab" style="left:0;top:395px;width:19px;height:1px;background:#cdcdcd"></div>
<div class="ab" style="left:20px;top:411px;width:1004px;height:1px;background:#dadada"></div>
<div class="ab" style="left:0;top:411px;width:19px;height:1px;background:#cdcdcd"></div>
<div class="ab" style="left:20px;top:427px;width:1004px;height:1px;background:#dadada"></div>
<div class="ab" style="left:0;top:427px;width:19px;height:1px;background:#cdcdcd"></div>
<div class="ab" style="left:20px;top:443px;width:1004px;height:1px;background:#dadada"></div>
<div class="ab" style="left:0;top:443px;width:19px;height:1px;background:#cdcdcd"></div>
<div class="ab" style="left:20px;top:459px;width:1004px;height:1px;background:#dadada"></div>
<div class="ab" style="left:0;top:459px;width:19px;height:1px;background:#cdcdcd"></div>
<div class="ab" style="left:20px;top:474px;width:1004px;height:1px;background:#dadada"></div>
<div class="ab" style="left:0;top:474px;width:19px;height:1px;background:#cdcdcd"></div>
<div class="ab" style="left:20px;top:490px;width:1004px;height:1px;background:#dadada"></div>
<div class="ab" style="left:0;top:490px;width:19px;height:1px;background:#cdcdcd"></div>
<div class="ab" style="left:20px;top:506px;width:1004px;height:1px;background:#dadada"></div>
<div class="ab" style="left:0;top:506px;width:19px;height:1px;background:#cdcdcd"></div>
<div class="ab" style="left:20px;top:522px;width:1004px;height:1px;background:#dadada"></div>
<div class="ab" style="left:0;top:522px;width:19px;height:1px;background:#cdcdcd"></div>
<div class="ab" style="left:20px;top:538px;width:1004px;height:1px;background:#dadada"></div>
<div class="ab" style="left:0;top:538px;width:19px;height:1px;background:#cdcdcd"></div>
<div class="ab" style="left:20px;top:554px;width:1004px;height:1px;background:#dadada"></div>
<div class="ab" style="left:0;top:554px;width:19px;height:1px;background:#cdcdcd"></div>
<div class="ab" style="left:20px;top:570px;width:1004px;height:1px;background:#dadada"></div>
<div class="ab" style="left:0;top:570px;width:19px;height:1px;background:#cdcdcd"></div>
<div class="t" style="left:68.45px;top:166.62px;font-size:10.61px;font-family:'Liberation Sans',sans-serif;color:#444;transform:scaleX(0.9500);transform-origin:0 0;-webkit-text-stroke:0.15px #444">A</div>
<div class="t" style="left:179.80px;top:166.62px;font-size:10.61px;font-family:'Liberation Sans',sans-serif;color:#444;transform:scaleX(0.9500);transform-origin:0 0;-webkit-text-stroke:0.15px #444">B</div>
<div class="t" style="left:304.02px;top:166.62px;font-size:10.61px;font-family:'Liberation Sans',sans-serif;color:#444;transform:scaleX(0.9500);transform-origin:0 0;-webkit-text-stroke:0.15px #444">F</div>
<div class="t" style="left:390.49px;top:166.62px;font-size:10.61px;font-family:'Liberation Sans',sans-serif;color:#444;transform:scaleX(0.9500);transform-origin:0 0;-webkit-text-stroke:0.15px #444">G</div>
<div class="t" style="left:441.17px;top:166.62px;font-size:10.61px;font-family:'Liberation Sans',sans-serif;color:#444;transform:scaleX(0.9500);transform-origin:0 0;-webkit-text-stroke:0.15px #444">H</div>
<div class="t" style="left:493.91px;top:166.62px;font-size:10.61px;font-family:'Liberation Sans',sans-serif;color:#444;transform:scaleX(0.9500);transform-origin:0 0;-webkit-text-stroke:0.15px #444">I</div>
<div class="t" style="left:543.58px;top:166.62px;font-size:10.61px;font-family:'Liberation Sans',sans-serif;color:#444;transform:scaleX(0.9500);transform-origin:0 0;-webkit-text-stroke:0.15px #444">J</div>
<div class="t" style="left:592.60px;top:166.62px;font-size:10.61px;font-family:'Liberation Sans',sans-serif;color:#444;transform:scaleX(0.9500);transform-origin:0 0;-webkit-text-stroke:0.15px #444">K</div>
<div class="t" style="left:643.75px;top:166.62px;font-size:10.61px;font-family:'Liberation Sans',sans-serif;color:#444;transform:scaleX(0.9500);transform-origin:0 0;-webkit-text-stroke:0.15px #444">L</div>
<div class="t" style="left:693.12px;top:166.62px;font-size:10.61px;font-family:'Liberation Sans',sans-serif;color:#444;transform:scaleX(0.9500);transform-origin:0 0;-webkit-text-stroke:0.15px #444">M</div>
<div class="t" style="left:744.17px;top:166.62px;font-size:10.61px;font-family:'Liberation Sans',sans-serif;color:#444;transform:scaleX(0.9500);transform-origin:0 0;-webkit-text-stroke:0.15px #444">N</div>
<div class="t" style="left:794.39px;top:166.62px;font-size:10.61px;font-family:'Liberation Sans',sans-serif;color:#444;transform:scaleX(0.9500);transform-origin:0 0;-webkit-text-stroke:0.15px #444">O</div>
<div class="t" style="left:845.30px;top:166.62px;font-size:10.61px;font-family:'Liberation Sans',sans-serif;color:#444;transform:scaleX(0.9500);transform-origin:0 0;-webkit-text-stroke:0.15px #444">P</div>
<div class="t" style="left:895.39px;top:166.62px;font-size:10.61px;font-family:'Liberation Sans',sans-serif;color:#444;transform:scaleX(0.9500);transform-origin:0 0;-webkit-text-stroke:0.15px #444">Q</div>
<div class="t" style="left:945.99px;top:166.62px;font-size:10.61px;font-family:'Liberation Sans',sans-serif;color:#444;transform:scaleX(0.9500);transform-origin:0 0;-webkit-text-stroke:0.15px #444">R</div>
<div class="t" style="left:996.95px;top:166.62px;font-size:10.61px;font-family:'Liberation Sans',sans-serif;color:#444;transform:scaleX(0.9500);transform-origin:0 0;-webkit-text-stroke:0.15px #444">S</div>
<div class="t" style="left:5.47px;top:189.19px;font-size:10.17px;font-family:'Liberation Sans',sans-serif;color:#444;transform:scaleX(0.9500);transform-origin:0 0;-webkit-text-stroke:0.2px #444">1</div>
<div class="t" style="left:5.62px;top:211.19px;font-size:10.17px;font-family:'Liberation Sans',sans-serif;color:#444;transform:scaleX(0.9500);transform-origin:0 0;-webkit-text-stroke:0.2px #444">2</div>
<div class="t" style="left:5.62px;top:232.19px;font-size:10.17px;font-family:'Liberation Sans',sans-serif;color:#444;transform:scaleX(0.9500);transform-origin:0 0;-webkit-text-stroke:0.2px #444">3</div>
<div class="t" style="left:5.67px;top:254.19px;font-size:10.17px;font-family:'Liberation Sans',sans-serif;color:#444;transform:scaleX(0.9500);transform-origin:0 0;-webkit-text-stroke:0.2px #444">4</div>
<div class="t" style="left:5.62px;top:276.19px;font-size:10.17px;font-family:'Liberation Sans',sans-serif;color:#444;transform:scaleX(0.9500);transform-origin:0 0;-webkit-text-stroke:0.2px #444">5</div>
<div class="t" style="left:5.57px;top:297.19px;font-size:10.17px;font-family:'Liberation Sans',sans-serif;color:#444;transform:scaleX(0.9500);transform-origin:0 0;-webkit-text-stroke:0.2px #444">6</div>
<div class="t" style="left:5.62px;top:319.19px;font-size:10.17px;font-family:'Liberation Sans',sans-serif;color:#444;transform:scaleX(0.9500);transform-origin:0 0;-webkit-text-stroke:0.2px #444">7</div>
<div class="t" style="left:5.59px;top:340.19px;font-size:10.17px;font-family:'Liberation Sans',sans-serif;color:#444;transform:scaleX(0.9500);transform-origin:0 0;-webkit-text-stroke:0.2px #444">8</div>
<div class="t" style="left:5.62px;top:362.19px;font-size:10.17px;font-family:'Liberation Sans',sans-serif;color:#444;transform:scaleX(0.9500);transform-origin:0 0;-webkit-text-stroke:0.2px #444">9</div>
<div class="t" style="left:2.74px;top:383.19px;font-size:10.17px;font-family:'Liberation Sans',sans-serif;color:#444;transform:scaleX(0.9500);transform-origin:0 0;-webkit-text-stroke:0.2px #444">10</div>
<div class="t" style="left:3.15px;top:399.19px;font-size:10.17px;font-family:'Liberation Sans',sans-serif;color:#444;transform:scaleX(0.9500);transform-origin:0 0;-webkit-text-stroke:0.2px #444">11</div>
<div class="t" style="left:2.81px;top:415.19px;font-size:10.17px;font-family:'Liberation Sans',sans-serif;color:#444;transform:scaleX(0.9500);transform-origin:0 0;-webkit-text-stroke:0.2px #444">12</div>
<div class="t" style="left:2.77px;top:431.19px;font-size:10.17px;font-family:'Liberation Sans',sans-serif;color:#444;transform:scaleX(0.9500);transform-origin:0 0;-webkit-text-stroke:0.2px #444">13</div>
<div class="t" style="left:2.72px;top:447.19px;font-size:10.17px;font-family:'Liberation Sans',sans-serif;color:#444;transform:scaleX(0.9500);transform-origin:0 0;-webkit-text-stroke:0.2px #444">14</div>
<div class="t" style="left:2.77px;top:462.19px;font-size:10.17px;font-family:'Liberation Sans',sans-serif;color:#444;transform:scaleX(0.9500);transform-origin:0 0;-webkit-text-stroke:0.2px #444">15</div>
<div class="t" style="left:2.77px;top:478.19px;font-size:10.17px;font-family:'Liberation Sans',sans-serif;color:#444;transform:scaleX(0.9500);transform-origin:0 0;-webkit-text-stroke:0.2px #444">16</div>
<div class="t" style="left:2.81px;top:494.19px;font-size:10.17px;font-family:'Liberation Sans',sans-serif;color:#444;transform:scaleX(0.9500);transform-origin:0 0;-webkit-text-stroke:0.2px #444">17</div>
<div class="t" style="left:2.77px;top:510.19px;font-size:10.17px;font-family:'Liberation Sans',sans-serif;color:#444;transform:scaleX(0.9500);transform-origin:0 0;-webkit-text-stroke:0.2px #444">18</div>
<div class="t" style="left:2.79px;top:526.19px;font-size:10.17px;font-family:'Liberation Sans',sans-serif;color:#444;transform:scaleX(0.9500);transform-origin:0 0;-webkit-text-stroke:0.2px #444">19</div>
<div class="t" style="left:2.86px;top:542.19px;font-size:10.17px;font-family:'Liberation Sans',sans-serif;color:#444;transform:scaleX(0.9500);transform-origin:0 0;-webkit-text-stroke:0.2px #444">20</div>
<div class="t" style="left:2.91px;top:558.19px;font-size:10.17px;font-family:'Liberation Sans',sans-serif;color:#444;transform:scaleX(0.9500);transform-origin:0 0;-webkit-text-stroke:0.2px #444">21</div>
<div class="t" style="left:2.94px;top:574.39px;font-size:10.17px;font-family:'Liberation Sans',sans-serif;color:#444;transform:scaleX(0.9500);transform-origin:0 0;-webkit-text-stroke:0.2px #444">22</div>
<div class="ab" style="left:20px;top:181px;width:349px;height:20px;background:#f4b183"></div>
<div class="ab" style="left:244px;top:181px;width:125px;height:20px;background:#f0a67c"></div>
<div class="ab" style="left:123px;top:201px;width:121px;height:194px;background:#efebf7"></div>
<div class="ab" style="left:244px;top:202px;width:125px;height:193px;background:#e8eef8"></div>
<div class="ab" style="left:20px;top:201px;width:349px;height:1px;background:#3a3a3a"></div>
<div class="ab" style="left:20px;top:223px;width:349px;height:1px;background:#3a3a3a"></div>
<div class="ab" style="left:20px;top:244px;width:349px;height:1px;background:#3a3a3a"></div>
<div class="ab" style="left:20px;top:266px;width:349px;height:1px;background:#3a3a3a"></div>
<div class="ab" style="left:20px;top:288px;width:349px;height:1px;background:#3a3a3a"></div>
<div class="ab" style="left:20px;top:309px;width:349px;height:1px;background:#3a3a3a"></div>
<div class="ab" style="left:20px;top:331px;width:349px;height:1px;background:#3a3a3a"></div>
<div class="ab" style="left:20px;top:352px;width:349px;height:1px;background:#3a3a3a"></div>
<div class="ab" style="left:20px;top:374px;width:349px;height:1px;background:#3a3a3a"></div>
<div class="ab" style="left:20px;top:395px;width:349px;height:1px;background:#3a3a3a"></div>
<div class="ab" style="left:122px;top:181px;width:1px;height:20px;background:#3a3a3a"></div>
<div class="t" style="left:38.74px;top:183.66px;font-size:16.64px;font-family:'Liberation Serif',serif;color:#141414;font-weight:bold;transform:scaleX(1.0333);transform-origin:0 0;-webkit-text-stroke:0.2px #141414">Mã hàng</div>
<div class="t" style="left:147.63px;top:183.56px;font-size:16.64px;font-family:'Liberation Serif',serif;color:#141414;font-weight:bold;transform:scaleX(1.0863);transform-origin:0 0;-webkit-text-stroke:0.2px #141414">Tên hàng</div>
<div class="t" style="left:263.73px;top:183.56px;font-size:16.64px;font-family:'Liberation Serif',serif;color:#141414;font-weight:bold;transform:scaleX(1.1001);transform-origin:0 0;-webkit-text-stroke:0.2px #141414">Thành tiền</div>
<div class="t" style="left:22.25px;top:204.28px;font-size:17.10px;font-family:'Liberation Serif',serif;color:#141414;transform:scaleX(1.0933);transform-origin:0 0;-webkit-text-stroke:0.3px #141414">0501010001</div>
<div class="t" style="left:126.47px;top:204.28px;font-size:17.10px;font-family:'Liberation Serif',serif;color:#141414;transform:scaleX(1.0309);transform-origin:0 0;-webkit-text-stroke:0.3px #141414">Harlech</div>
<div class="t" style="left:268.25px;top:204.28px;font-size:17.10px;font-family:'Liberation Serif',serif;color:#141414;transform:scaleX(1.0689);transform-origin:0 0;-webkit-text-stroke:0.3px #141414">129.483.360</div>
<svg class="ab" style="left:20px;top:202px" width="6" height="6"><path d="M0 0 L5 0 L0 5Z" fill="#1a8a1a"/></svg>
<div class="t" style="left:22.25px;top:225.88px;font-size:17.10px;font-family:'Liberation Serif',serif;color:#141414;transform:scaleX(1.0933);transform-origin:0 0;-webkit-text-stroke:0.3px #141414">0501012001</div>
<div class="t" style="left:126.47px;top:225.88px;font-size:17.10px;font-family:'Liberation Serif',serif;color:#141414;transform:scaleX(1.0309);transform-origin:0 0;-webkit-text-stroke:0.3px #141414">Kelvingrove</div>
<div class="t" style="left:268.25px;top:225.88px;font-size:17.10px;font-family:'Liberation Serif',serif;color:#141414;transform:scaleX(1.0689);transform-origin:0 0;-webkit-text-stroke:0.3px #141414">470.008.000</div>
<svg class="ab" style="left:20px;top:224px" width="6" height="6"><path d="M0 0 L5 0 L0 5Z" fill="#1a8a1a"/></svg>
<div class="t" style="left:22.25px;top:247.48px;font-size:17.10px;font-family:'Liberation Serif',serif;color:#141414;transform:scaleX(1.0933);transform-origin:0 0;-webkit-text-stroke:0.3px #141414">0501017001</div>
<div class="t" style="left:126.47px;top:247.48px;font-size:17.10px;font-family:'Liberation Serif',serif;color:#141414;transform:scaleX(1.0309);transform-origin:0 0;-webkit-text-stroke:0.3px #141414">Princetown</div>
<div class="t" style="left:268.25px;top:247.48px;font-size:17.10px;font-family:'Liberation Serif',serif;color:#141414;transform:scaleX(1.0689);transform-origin:0 0;-webkit-text-stroke:0.3px #141414">944.640.000</div>
<svg class="ab" style="left:20px;top:245px" width="6" height="6"><path d="M0 0 L5 0 L0 5Z" fill="#1a8a1a"/></svg>
<div class="t" style="left:22.25px;top:269.08px;font-size:17.10px;font-family:'Liberation Serif',serif;color:#141414;transform:scaleX(1.0933);transform-origin:0 0;-webkit-text-stroke:0.3px #141414">0501018001</div>
<div class="t" style="left:125.85px;top:269.08px;font-size:17.10px;font-family:'Liberation Serif',serif;color:#141414;transform:scaleX(1.0309);transform-origin:0 0;-webkit-text-stroke:0.3px #141414">Seagrove</div>
<div class="t" style="left:268.25px;top:269.08px;font-size:17.10px;font-family:'Liberation Serif',serif;color:#141414;transform:scaleX(1.0689);transform-origin:0 0;-webkit-text-stroke:0.3px #141414">963.996.000</div>
<svg class="ab" style="left:20px;top:267px" width="6" height="6"><path d="M0 0 L5 0 L0 5Z" fill="#1a8a1a"/></svg>
<div class="t" style="left:22.25px;top:290.68px;font-size:17.10px;font-family:'Liberation Serif',serif;color:#141414;transform:scaleX(1.0933);transform-origin:0 0;-webkit-text-stroke:0.3px #141414">0501020001</div>
<div class="t" style="left:125.85px;top:290.68px;font-size:17.10px;font-family:'Liberation Serif',serif;color:#141414;transform:scaleX(1.0309);transform-origin:0 0;-webkit-text-stroke:0.3px #141414">Summerhill</div>
<div class="t" style="left:268.25px;top:290.68px;font-size:17.10px;font-family:'Liberation Serif',serif;color:#141414;transform:scaleX(1.0689);transform-origin:0 0;-webkit-text-stroke:0.3px #141414">748.176.000</div>
<svg class="ab" style="left:20px;top:289px" width="6" height="6"><path d="M0 0 L5 0 L0 5Z" fill="#1a8a1a"/></svg>
<div class="t" style="left:22.25px;top:312.28px;font-size:17.10px;font-family:'Liberation Serif',serif;color:#141414;transform:scaleX(1.0933);transform-origin:0 0;-webkit-text-stroke:0.3px #141414">0501024001</div>
<div class="t" style="left:126.29px;top:312.28px;font-size:17.10px;font-family:'Liberation Serif',serif;color:#141414;transform:scaleX(1.0309);transform-origin:0 0;-webkit-text-stroke:0.3px #141414">Cambria</div>
<div class="t" style="left:268.25px;top:312.28px;font-size:17.10px;font-family:'Liberation Serif',serif;color:#141414;transform:scaleX(1.0689);transform-origin:0 0;-webkit-text-stroke:0.3px #141414">438.100.200</div>
<svg class="ab" style="left:20px;top:310px" width="6" height="6"><path d="M0 0 L5 0 L0 5Z" fill="#1a8a1a"/></svg>
<div class="t" style="left:22.25px;top:333.88px;font-size:17.10px;font-family:'Liberation Serif',serif;color:#141414;transform:scaleX(1.0933);transform-origin:0 0;-webkit-text-stroke:0.3px #141414">0501027001</div>
<div class="t" style="left:125.85px;top:333.88px;font-size:17.10px;font-family:'Liberation Serif',serif;color:#141414;transform:scaleX(1.0309);transform-origin:0 0;-webkit-text-stroke:0.3px #141414">Swanbridge</div>
<div class="t" style="left:268.25px;top:333.88px;font-size:17.10px;font-family:'Liberation Serif',serif;color:#141414;transform:scaleX(1.0689);transform-origin:0 0;-webkit-text-stroke:0.3px #141414">247.375.520</div>
<svg class="ab" style="left:20px;top:332px" width="6" height="6"><path d="M0 0 L5 0 L0 5Z" fill="#1a8a1a"/></svg>
<div class="t" style="left:22.25px;top:355.48px;font-size:17.10px;font-family:'Liberation Serif',serif;color:#141414;transform:scaleX(1.0933);transform-origin:0 0;-webkit-text-stroke:0.3px #141414">0501036001</div>
<div class="t" style="left:125.85px;top:355.48px;font-size:17.10px;font-family:'Liberation Serif',serif;color:#141414;transform:scaleX(1.0309);transform-origin:0 0;-webkit-text-stroke:0.3px #141414">Skye</div>
<div class="t" style="left:268.25px;top:355.48px;font-size:17.10px;font-family:'Liberation Serif',serif;color:#141414;transform:scaleX(1.0689);transform-origin:0 0;-webkit-text-stroke:0.3px #141414">770.901.120</div>
<svg class="ab" style="left:20px;top:353px" width="6" height="6"><path d="M0 0 L5 0 L0 5Z" fill="#1a8a1a"/></svg>
<div class="t" style="left:22.25px;top:377.08px;font-size:17.10px;font-family:'Liberation Serif',serif;color:#141414;transform:scaleX(1.0933);transform-origin:0 0;-webkit-text-stroke:0.3px #141414">0502001001</div>
<div class="t" style="left:126.47px;top:377.08px;font-size:17.10px;font-family:'Liberation Serif',serif;color:#141414;transform:scaleX(1.0309);transform-origin:0 0;-webkit-text-stroke:0.3px #141414">Marble</div>
<div class="t" style="left:268.25px;top:377.08px;font-size:17.10px;font-family:'Liberation Serif',serif;color:#141414;transform:scaleX(1.0689);transform-origin:0 0;-webkit-text-stroke:0.3px #141414">460.152.000</div>
<svg class="ab" style="left:20px;top:375px" width="6" height="6"><path d="M0 0 L5 0 L0 5Z" fill="#1a8a1a"/></svg>
<div class="ab" style="left:121px;top:201px;width:2px;height:195px;background:#8156c4"></div>
<div class="ab" style="left:243px;top:203px;width:2px;height:193px;background:#8156c4"></div>
<div class="ab" style="left:123px;top:395px;width:121px;height:2px;background:#8156c4"></div>
<div class="ab" style="left:123px;top:200px;width:121px;height:2px;background:#8156c4"></div>
<div class="ab" style="left:245px;top:395px;width:124px;height:2px;background:#3567cc"></div>
<div class="ab" style="left:368px;top:203px;width:2px;height:192px;background:#3567cc"></div>
<div class="ab" style="left:243px;top:181px;width:2px;height:21px;background:#cc3344"></div>
<div class="ab" style="left:368px;top:181px;width:2px;height:21px;background:#cc3344"></div>
<div class="ab" style="left:245px;top:201px;width:123px;height:2px;background:#cc3344"></div>
<div class="ab" style="left:119.5px;top:197.5px;width:7px;height:7px;background:#fff"></div>
<div class="ab" style="left:120.5px;top:198.5px;width:5px;height:5px;background:#8156c4"></div>
<div class="ab" style="left:240.0px;top:197.5px;width:7px;height:7px;background:#fff"></div>
<div class="ab" style="left:241.0px;top:198.5px;width:5px;height:5px;background:#8156c4"></div>
<div class="ab" style="left:119.3px;top:392.0px;width:7px;height:7px;background:#fff"></div>
<div class="ab" style="left:120.3px;top:393.0px;width:5px;height:5px;background:#8156c4"></div>
<div class="ab" style="left:240.0px;top:392.0px;width:7px;height:7px;background:#fff"></div>
<div class="ab" style="left:241.0px;top:393.0px;width:5px;height:5px;background:#8156c4"></div>
<div class="ab" style="left:366.0px;top:199.0px;width:6px;height:6px;background:#fff"></div>
<div class="ab" style="left:367.0px;top:200.0px;width:4px;height:4px;background:#cc3344"></div>
<div class="ab" style="left:365.2px;top:392.0px;width:7px;height:7px;background:#fff"></div>
<div class="ab" style="left:366.2px;top:393.0px;width:5px;height:5px;background:#3567cc"></div>
<div class="ab" style="left:242px;top:180px;width:4px;height:2px;background:#cc3344"></div>
<div class="ab" style="left:367px;top:180px;width:4px;height:2px;background:#cc3344"></div>
<div class="ab" style="left:379px;top:184px;width:594px;height:358px;background:#fff"></div>
<div class="ab" style="left:378px;top:183px;width:596px;height:360px;border:2px solid #a9a9a9"></div>
<div class="t" style="left:644.63px;top:193.07px;font-size:14.10px;font-family:'Liberation Sans',sans-serif;color:#595959;transform:scaleX(0.9477);transform-origin:0 0;">Thành tiền</div>
<svg class="ab" style="left:0;top:0" width="1024" height="584"><path d="M675.40 364.10 L675.40 222.10 A142 142 0 0 1 697.64 223.85 Z" fill="#5B9BD5" fill-opacity="1.0" stroke="#fff" stroke-width="1.6" stroke-linejoin="round"/><path d="M675.40 364.10 L697.64 223.85 A142 142 0 0 1 769.90 258.11 Z" fill="#ED7D31" fill-opacity="1.0" stroke="#fff" stroke-width="1.6" stroke-linejoin="round"/><path d="M675.40 364.10 L769.90 258.11 A142 142 0 0 1 810.86 406.71 Z" fill="#A5A5A5" fill-opacity="1.0" stroke="#fff" stroke-width="1.6" stroke-linejoin="round"/><path d="M675.40 364.10 L810.86 406.71 A142 142 0 0 1 688.88 505.46 Z" fill="#FFC000" fill-opacity="1.0" stroke="#fff" stroke-width="1.6" stroke-linejoin="round"/><path d="M675.40 364.10 L688.88 505.46 A142 142 0 0 1 572.19 461.63 Z" fill="#4472C4" fill-opacity="1.0" stroke="#fff" stroke-width="1.6" stroke-linejoin="round"/><path d="M675.40 364.10 L572.19 461.63 A142 142 0 0 1 536.98 395.78 Z" fill="#70AD47" fill-opacity="1.0" stroke="#fff" stroke-width="1.6" stroke-linejoin="round"/><path d="M675.40 364.10 L536.98 395.78 A142 142 0 0 1 533.80 353.39 Z" fill="#255E91" fill-opacity="1.0" stroke="#fff" stroke-width="1.6" stroke-linejoin="round"/><path d="M675.40 364.10 L533.80 353.39 A142 142 0 0 1 600.10 243.71 Z" fill="#9E480E" fill-opacity="1.0" stroke="#fff" stroke-width="1.6" stroke-linejoin="round"/><path d="M675.40 364.10 L600.10 243.71 A142 142 0 0 1 675.40 222.10 Z" fill="#636363" fill-opacity="1.0" stroke="#fff" stroke-width="1.6" stroke-linejoin="round"/></svg>
<div class="ab" style="left:438.0px;top:526.5px;width:3px;height:3px;background:#5B9BD5"></div>
<div class="t" style="left:443.78px;top:522.88px;font-size:9.59px;font-family:'Liberation Sans',sans-serif;color:#595959;transform:scaleX(0.9380);transform-origin:0 0;">Harlech</div>
<div class="ab" style="left:480.0px;top:526.5px;width:3px;height:3px;background:#ED7D31"></div>
<div class="t" style="left:485.28px;top:522.88px;font-size:9.59px;font-family:'Liberation Sans',sans-serif;color:#595959;transform:scaleX(0.9380);transform-origin:0 0;">Kelvingrove</div>
<div class="ab" style="left:545.0px;top:526.5px;width:3px;height:3px;background:#A5A5A5"></div>
<div class="t" style="left:550.28px;top:522.88px;font-size:9.59px;font-family:'Liberation Sans',sans-serif;color:#595959;transform:scaleX(0.9380);transform-origin:0 0;">Princetown</div>
<div class="ab" style="left:611.0px;top:526.5px;width:3px;height:3px;background:#FFC000"></div>
<div class="t" style="left:616.60px;top:522.88px;font-size:9.59px;font-family:'Liberation Sans',sans-serif;color:#595959;transform:scaleX(0.9380);transform-origin:0 0;">Seagrove</div>
<div class="ab" style="left:668.0px;top:526.5px;width:3px;height:3px;background:#4472C4"></div>
<div class="t" style="left:674.20px;top:522.88px;font-size:9.59px;font-family:'Liberation Sans',sans-serif;color:#595959;transform:scaleX(0.9380);transform-origin:0 0;">Summerhill</div>
<div class="ab" style="left:731.6px;top:526.5px;width:3px;height:3px;background:#70AD47"></div>
<div class="t" style="left:737.15px;top:522.88px;font-size:9.59px;font-family:'Liberation Sans',sans-serif;color:#595959;transform:scaleX(0.9380);transform-origin:0 0;">Cambria</div>
<div class="ab" style="left:783.0px;top:526.5px;width:3px;height:3px;background:#255E91"></div>
<div class="t" style="left:788.60px;top:522.88px;font-size:9.59px;font-family:'Liberation Sans',sans-serif;color:#595959;transform:scaleX(0.9380);transform-origin:0 0;">Swanbridge</div>
<div class="ab" style="left:846.6px;top:526.5px;width:3px;height:3px;background:#9E480E"></div>
<div class="t" style="left:852.90px;top:522.88px;font-size:9.59px;font-family:'Liberation Sans',sans-serif;color:#595959;transform:scaleX(0.9380);transform-origin:0 0;">Skye</div>
<div class="ab" style="left:883.8px;top:526.5px;width:3px;height:3px;background:#636363"></div>
<div class="t" style="left:889.18px;top:522.88px;font-size:9.59px;font-family:'Liberation Sans',sans-serif;color:#595959;transform:scaleX(0.9380);transform-origin:0 0;">Marble</div>
<svg class="ab" style="left:0;top:0" width="1024" height="584"><circle cx="379" cy="184" r="4.6" fill="#fff" stroke="#8e8e8e" stroke-width="1.6"/><circle cx="676" cy="184" r="4.6" fill="#fff" stroke="#8e8e8e" stroke-width="1.6"/><circle cx="973" cy="184" r="4.6" fill="#fff" stroke="#8e8e8e" stroke-width="1.6"/><circle cx="379" cy="363" r="4.6" fill="#fff" stroke="#8e8e8e" stroke-width="1.6"/><circle cx="973" cy="363" r="4.6" fill="#fff" stroke="#8e8e8e" stroke-width="1.6"/><circle cx="379" cy="542" r="4.6" fill="#fff" stroke="#8e8e8e" stroke-width="1.6"/><circle cx="676" cy="542" r="4.6" fill="#fff" stroke="#8e8e8e" stroke-width="1.6"/><circle cx="973" cy="542" r="4.6" fill="#fff" stroke="#8e8e8e" stroke-width="1.6"/></svg>
<div class="ab" style="left:985px;top:182px;width:26px;height:26px;background:#fff;border:1px solid #c8c8c8"></div>
<div class="ab" style="left:985px;top:218px;width:26px;height:26px;background:#fff;border:1px solid #c8c8c8"></div>
<div class="ab" style="left:985px;top:254px;width:26px;height:26px;background:#fff;border:1px solid #c8c8c8"></div>
<svg class="ab" style="left:985px;top:182px" width="26" height="100" viewBox="985 182 26 100">
<path d="M997.7 188.7 V202.1 M991 195.4 H1004.4" stroke="#5a9e7c" stroke-width="3.1"/>
<path d="M1006.3 223.6 L1004.2 222.2 L999.2 229.6 L1001.2 231 Z" fill="#707070"/>
<path d="M999 230.2 L1001.4 231.8 L999.8 234 L997.5 232.4 Z" fill="#9a9a9a"/>
<path d="M997.4 232.6 C994.5 232.6 992.5 234.5 991.5 236.3 C991 237.3 990.2 238.2 989.6 238.6 C993 239.2 997 238.5 998.7 236.6 C999.7 235.5 999.6 234 999.5 233.8 Z" fill="#3c7fc1"/>
<path d="M989.3 259.2 H1006.2 L999.6 266.2 V273.6 H996.8 V266.2 Z" fill="#7a7a7a"/>
<path d="M992.5 261 H1003 L998.5 265.5 V272 H997.8 V265.5 Z" fill="none" stroke="#fff" stroke-width="0.7" opacity="0.6"/>
</svg>
<div class="ab" style="left:463px;top:155px;width:178px;height:59px;background:#fff;border:1px solid #d4d4d4;box-shadow:1px 1px 3px rgba(0,0,0,0.18)"></div>
<svg class="ab" style="left:470px;top:158px" width="76" height="30" viewBox="470 158 76 30">
<path d="M477.3 172.2 L485 164.6 L491.4 171.4 L484 178.6 Z" fill="#fff" stroke="#3d3d3d" stroke-width="1" stroke-linejoin="round"/>
<path d="M482.3 166.5 V162.6 H486.2 V168.5" fill="none" stroke="#3d3d3d" stroke-width="0.9"/>
<circle cx="485.8" cy="169" r="0.9" fill="#3d3d3d"/>
<path d="M489.5 167.2 C492.5 168.5 493 173 491.2 178 C491 175 490.8 172 489.2 169.8 Z" fill="#3c7fc1"/>
<rect x="473" y="178.8" width="22.7" height="5.3" fill="#ed7d31"/>
<path d="M496.5 171.2 L501.2 171.2 L498.85 174 Z" fill="#555"/>
<path d="M530 163.6 H514.9 V177.2 H520" fill="none" stroke="#6a6a6a" stroke-width="1"/>
<path d="M521 177.6 L522 174.2 L532.2 164 L534.6 166.4 L524.4 176.6 Z" fill="#3c7fc1"/>
<path d="M533 162.6 L534.2 161.4 L536.6 163.8 L535.4 165 Z" fill="#3c7fc1"/>
<rect x="514.3" y="178.8" width="22.6" height="5.3" fill="#5b9bd5"/>
<path d="M537.7 171.2 L542.5 171.2 L540.1 174 Z" fill="#555"/>
</svg>
<div class="t" style="left:478.00px;top:190.63px;font-size:11.19px;font-family:'Liberation Sans',sans-serif;color:#595959;">Fill</div>
<div class="t" style="left:507.08px;top:190.63px;font-size:11.19px;font-family:'Liberation Sans',sans-serif;color:#595959;transform:scaleX(1.0315);transform-origin:0 0;">Outline</div>
<div class="ab" style="left:548px;top:173px;width:90px;height:23px;background:#fff;border:1px solid #c6c6c6"></div>
<div class="t" style="left:551.26px;top:177.26px;font-size:11.63px;font-family:'Liberation Sans',sans-serif;color:#444;transform:scaleX(0.9236);transform-origin:0 0;">Chart Area</div>
<svg class="ab" style="left:627px;top:182px" width="7" height="4"><path d="M0 0 L6 0 L3 3Z" fill="#666"/></svg>
<div class="ab" style="left:463px;top:228px;width:158px;height:360px;background:#fff;border:1px solid #cfcfcf;box-shadow:0 0 4px rgba(0,0,0,0.16)"></div>
<div class="ab" style="left:466px;top:253px;width:152px;height:21px;background:#c6c6c6"></div>
<div class="ab" style="left:487px;top:279px;width:132px;height:16px;background:#ececec"></div>
<div class="t" style="left:494.63px;top:235.03px;font-size:11.77px;font-family:'Liberation Sans',sans-serif;color:#474747;transform:scaleX(0.9683);transform-origin:0 0;">Cu<u>t</u></div>
<div class="t" style="left:494.64px;top:256.93px;font-size:11.77px;font-family:'Liberation Sans',sans-serif;color:#474747;transform:scaleX(0.9516);transform-origin:0 0;"><u>C</u>opy</div>
<div class="t" style="left:495.51px;top:278.83px;font-size:11.77px;font-family:'Liberation Sans',sans-serif;color:#444;font-weight:bold;transform:scaleX(0.9030);transform-origin:0 0;">Paste Options:</div>
<div class="ab" style="left:494px;top:324px;width:125px;height:1px;background:#e3e3e3"></div>
<div class="t" style="left:494.32px;top:330.73px;font-size:11.77px;font-family:'Liberation Sans',sans-serif;color:#474747;transform:scaleX(0.9325);transform-origin:0 0;">Reset to M<u>a</u>tch Style</div>
<div class="ab" style="left:494px;top:348px;width:125px;height:1px;background:#e3e3e3"></div>
<div class="t" style="left:494.29px;top:354.93px;font-size:11.77px;font-family:'Liberation Sans',sans-serif;color:#474747;transform:scaleX(0.9611);transform-origin:0 0;"><u>F</u>ont...</div>
<div class="ab" style="left:494px;top:372px;width:125px;height:1px;background:#e3e3e3"></div>
<div class="t" style="left:494.65px;top:379.03px;font-size:11.77px;font-family:'Liberation Sans',sans-serif;color:#474747;transform:scaleX(0.9262);transform-origin:0 0;">Change Chart T<u>y</u>pe...</div>
<div class="t" style="left:494.72px;top:402.03px;font-size:11.77px;font-family:'Liberation Sans',sans-serif;color:#474747;transform:scaleX(0.9031);transform-origin:0 0;"><u>S</u>ave as Template...</div>
<div class="t" style="left:494.73px;top:424.33px;font-size:11.77px;font-family:'Liberation Sans',sans-serif;color:#474747;transform:scaleX(0.8950);transform-origin:0 0;">S<u>e</u>lect Data...</div>
<div class="t" style="left:494.30px;top:446.93px;font-size:11.77px;font-family:'Liberation Sans',sans-serif;color:#474747;transform:scaleX(0.9543);transform-origin:0 0;">Mo<u>v</u>e Chart...</div>
<div class="t" style="left:494.76px;top:469.43px;font-size:11.77px;font-family:'Liberation Sans',sans-serif;color:#ababab;transform:scaleX(0.9388);transform-origin:0 0;">3-D <u>R</u>otation...</div>
<div class="ab" style="left:494px;top:487px;width:125px;height:1px;background:#e3e3e3"></div>
<div class="t" style="left:494.64px;top:493.53px;font-size:11.77px;font-family:'Liberation Sans',sans-serif;color:#ababab;transform:scaleX(0.9441);transform-origin:0 0;"><u>G</u>roup</div>
<div class="t" style="left:494.29px;top:516.03px;font-size:11.77px;font-family:'Liberation Sans',sans-serif;color:#ababab;transform:scaleX(0.9618);transform-origin:0 0;">Bring to F<u>r</u>ont</div>
<div class="t" style="left:494.72px;top:538.63px;font-size:11.77px;font-family:'Liberation Sans',sans-serif;color:#ababab;transform:scaleX(0.9033);transform-origin:0 0;">Send to Bac<u>k</u></div>
<div class="ab" style="left:494px;top:556px;width:125px;height:1px;background:#e3e3e3"></div>
<div class="t" style="left:495.20px;top:562.63px;font-size:11.77px;font-family:'Liberation Sans',sans-serif;color:#474747;transform:scaleX(0.9356);transform-origin:0 0;">Assi<u>g</u>n Macro...</div>
<div class="ab" style="left:494px;top:580px;width:125px;height:1px;background:#e3e3e3"></div>
<svg class="ab" style="left:607px;top:497px" width="5" height="7"><path d="M0.5 0.5 L4 3.3 L0.5 6Z" fill="#b0b0b0"/></svg>
<svg class="ab" style="left:607px;top:519px" width="5" height="7"><path d="M0.5 0.5 L4 3.3 L0.5 6Z" fill="#b0b0b0"/></svg>
<svg class="ab" style="left:607px;top:542px" width="5" height="7"><path d="M0.5 0.5 L4 3.3 L0.5 6Z" fill="#b0b0b0"/></svg>
<div class="ab" style="left:598px;top:516px;width:1px;height:13px;background:#e1e1e1"></div>
<div class="ab" style="left:598px;top:538px;width:1px;height:13px;background:#e1e1e1"></div>
<svg class="ab" style="left:464px;top:229px" width="56" height="330" viewBox="464 229 56 330">
<!-- scissors -->
<path d="M470.6 234.6 L472.8 233.8 L479 242.4 L477.8 243.2 Z M481 234.6 L478.8 233.8 L472.6 242.4 L473.8 243.2 Z" fill="#555"/>
<circle cx="472.6" cy="244.9" r="2.5" fill="none" stroke="#4a86c5" stroke-width="1.1"/>
<circle cx="480.2" cy="244.9" r="2.5" fill="none" stroke="#4a86c5" stroke-width="1.1"/>
<!-- copy -->
<path d="M469.5 258 H475 L477.5 260.5 V266 H469.5 Z" fill="#fff" stroke="#6a6a6a" stroke-width="0.9"/>
<path d="M474.5 260.5 H480 L482.5 263 V269.5 H474.5 Z" fill="#fff" stroke="#6a6a6a" stroke-width="0.9"/>
<path d="M471 260.8h3M471 262.6h3M476.2 263.6h4.6M476.2 265.6h4.6M476.2 267.6h4.6" stroke="#3c7fc1" stroke-width="0.7"/>
<!-- paste small -->
<rect x="469.6" y="281" width="7.5" height="10.5" fill="#e6c18a"/>
<rect x="471.5" y="279.5" width="3.5" height="2.5" fill="#777"/>
<path d="M476.5 284.5 H480.5 L483 287 V292.5 H476.5 Z" fill="#fff" stroke="#555" stroke-width="0.9"/>
<!-- paste big -->
<rect x="493" y="301" width="16.5" height="18" rx="1" fill="#e6c18a"/>
<path d="M497.5 303.5 V301 H499.5 C499.5 298.5 503 298.5 503 301 H505.5 V303.5 Z" fill="#555"/>
<path d="M501.5 308.5 H509 L512.5 312 V320.5 H501.5 Z" fill="#fff" stroke="#444" stroke-width="1"/>
<!-- reset -->
<rect x="472.5" y="332" width="11" height="11.5" fill="#fff" stroke="#7a7a7a" stroke-width="1"/>
<rect x="481" y="331.5" width="2.5" height="2" fill="#7a7a7a"/>
<circle cx="475.5" cy="337" r="1" fill="#666"/><path d="M477.5 337h4.5M477.5 340.5h4.5" stroke="#666" stroke-width="1"/>
<circle cx="475.5" cy="340.5" r="0.9" fill="none" stroke="#666" stroke-width="0.6"/>
<path d="M478 331.5 C475 329.5 471.5 330.5 470 334" fill="none" stroke="#3c7fc1" stroke-width="1.5"/>
<path d="M468 331.5 L469.5 336.5 L473 333.5 Z" fill="#3c7fc1"/>
<!-- A -->
<path d="M471.8 364.5 L475.8 356.7 L479.8 364.5 M473.3 361.8 H478.3" fill="none" stroke="#404040" stroke-width="1.3"/>
<!-- chart type -->
<rect x="469.2" y="383.6" width="3.8" height="7.8" fill="#3e78c0"/>
<rect x="474.2" y="378.8" width="3.6" height="12.6" fill="#e9bf7d"/>
<rect x="479" y="381.8" width="4" height="9.6" fill="#666"/>
<!-- save template -->
<rect x="469.5" y="404" width="2.9" height="9.6" fill="#3e78c0"/>
<rect x="474" y="400.4" width="3.6" height="4.2" fill="#e9bf7d"/>
<rect x="479" y="402.2" width="3.7" height="2.4" fill="#555"/>
<rect x="473.4" y="405.8" width="10.5" height="9.5" fill="#8e50b5"/>
<rect x="475.5" y="407" width="6" height="3" fill="#fff"/>
<rect x="476.5" y="412" width="4" height="3.3" fill="#fff"/>
<!-- select data -->
<rect x="468.5" y="423.5" width="12" height="10" fill="#fff" stroke="#8a8a8a" stroke-width="0.9"/>
<rect x="468.5" y="423.5" width="12" height="2" fill="#7a7a7a"/>
<path d="M469 428.5h11M469 431h11M472.5 425.5v8M476.5 425.5v8" stroke="#c0c0c0" stroke-width="0.7"/>
<path d="M472.5 434 V428.5 H477" fill="none" stroke="#ed7d31" stroke-width="1.1"/>
<rect x="475.5" y="429.5" width="8" height="8" fill="#fff" stroke="#777" stroke-width="1"/>
<path d="M477.5 436.5v-3M479.5 436.5v-5M481.5 436.5v-4" stroke="#777" stroke-width="0.9"/>
<!-- move chart -->
<rect x="468.8" y="446.3" width="14.2" height="10.5" rx="1" fill="#fff" stroke="#6a6a6a" stroke-width="1"/>
<path d="M471.5 454.5 V450.5 H473 V454.5 M473 454.5 V448.5 H474.5 V454.5 M474.5 454.5 V451.5 H476 V454.5 M470.5 454.5h9" fill="none" stroke="#6a6a6a" stroke-width="0.8"/>
<path d="M472 457.5 H478 L476 459 H474Z" fill="#6a6a6a"/>
<!-- 3D -->
<path d="M469.5 472 L472 469.8 H481.5 V478.5 L479.5 481 H469.5 Z" fill="#eceaee" stroke="#c9c9c9" stroke-width="1"/>
<path d="M469.5 472 H479.5 V481 M479.5 472 L481.5 469.8" fill="none" stroke="#d0d0d0" stroke-width="0.9"/>
<!-- group -->
<rect x="471.5" y="494.5" width="7" height="6" fill="none" stroke="#c8c8c8" stroke-width="1"/>
<rect x="474" y="497" width="7" height="6" fill="none" stroke="#c8c8c8" stroke-width="1"/>
<rect x="468.5" y="492" width="2" height="2" fill="#bdbdbd"/><rect x="481.5" y="492" width="2" height="2" fill="#bdbdbd"/>
<rect x="468.5" y="504" width="2" height="2" fill="#bdbdbd"/><rect x="481.5" y="504" width="2" height="2" fill="#bdbdbd"/>
<!-- bring front -->
<path d="M469 518 V514.7 H472 M483 524 V527.5 H479" fill="none" stroke="#c8c8c8" stroke-width="1"/>
<rect x="471.5" y="517.5" width="8.5" height="8" fill="#dcdcdc"/>
<!-- send back -->
<rect x="469" y="537" width="4" height="4" fill="none" stroke="#c8c8c8" stroke-width="1"/>
<rect x="472.5" y="540.5" width="5.5" height="5" fill="#dedede"/>
<rect x="478.5" y="545.5" width="4.5" height="4.5" fill="none" stroke="#c8c8c8" stroke-width="1"/>
</svg>
<div class="ab" style="left:461px;top:249px;width:162px;height:30px;border:5px solid #e2202c"></div>
</body></html>
